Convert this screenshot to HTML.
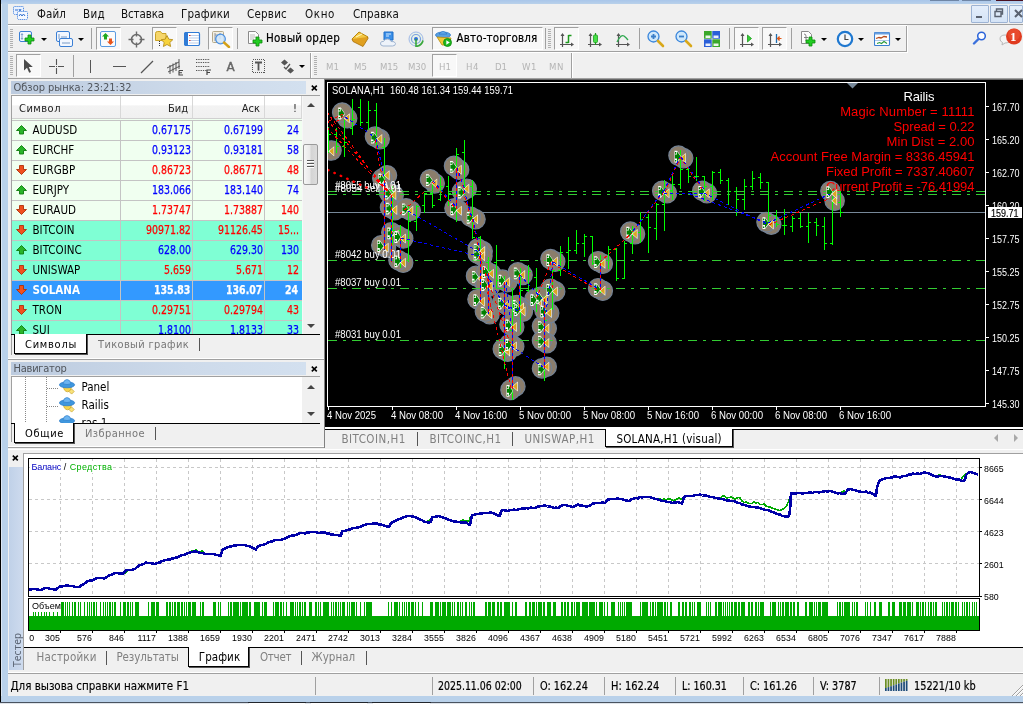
<!DOCTYPE html>
<html lang="ru"><head><meta charset="utf-8"><title>MetaTrader 4</title>
<style>

html,body{margin:0;padding:0;background:#fff;}
body{width:1036px;height:704px;overflow:hidden;position:relative;}
#app{position:absolute;left:0;top:0;width:1036px;height:704px;overflow:hidden;will-change:transform;font-family:"DejaVu Sans Condensed","DejaVu Sans","Liberation Sans",sans-serif;font-size:11px;}
#app div,#app svg,#app span.t{position:absolute;}
#app>div,#app>svg{display:block;}
span.t{white-space:pre;line-height:normal;}
.frame-l{left:0;top:0;width:8px;height:702px;background:linear-gradient(90deg,#000 0,#000 1px,#dbe6f3 1px,#dbe6f3 2px,#b9d1ea 2px,#b9d1ea 8px);}
.frame-t{left:1px;top:0;width:1022px;height:4px;background:linear-gradient(180deg,#a9c6ea,#b9d1ea);}
.frame-b{left:1px;top:696px;width:1022px;height:6px;background:#b9d1ea;}
.mdi{box-sizing:border-box;border:1px solid #9db3d3;background:linear-gradient(180deg,#e4eefb,#d4e3f6);border-radius:1px;}
.grip{background:repeating-linear-gradient(180deg,#b0b0b0 0,#b0b0b0 1px,transparent 1px,transparent 2px);}
.pressed{box-sizing:border-box;border:1px solid #a0a0a0;border-right-color:#fff;border-bottom-color:#fff;background:#f8f8f8;}
.vt{position:absolute;left:2px;top:37px;transform-origin:0 0;transform:rotate(-90deg);white-space:pre;font-size:10.500px;color:#5a6473;line-height:12px;}
.dd{width:0;height:0;border-left:3px solid transparent;border-right:3px solid transparent;border-top:3px solid #000;}


.phead{background:linear-gradient(90deg,#bccbdf,#cddaea 60%,#d3e0ef);}
.thead{background:linear-gradient(180deg,#fff 0,#fff 40%,#f3f3f3 45%,#f0f0f0 100%);box-sizing:border-box;border-right:1px solid #d8d8d8;border-bottom:1px solid #d0d0d0;}
.tab{box-sizing:border-box;background:#fff;border:1px solid #000;border-top:none;box-shadow:1px 1px 0 #555;}
.sthumb{box-sizing:border-box;border:1px solid #9a9a9a;border-radius:2px;background:linear-gradient(90deg,#f6f6f6,#e9e9e9 45%,#d4d4d4 55%,#dcdcdc);}



.vstrip{background:linear-gradient(90deg,#c0d1e8,#cedbee);}

</style></head>
<body>
<div id="app">
<div class="frame-l"></div><div class="frame-t"></div><div class="frame-b"></div>
<div style="left:930px;top:0px;width:29px;height:1px;background:#6f86a6;"></div>
<div style="left:962px;top:0px;width:29px;height:1px;background:#6f86a6;"></div>
<div style="left:996px;top:0px;width:27px;height:1px;background:#4a1020;"></div>
<div id="menubar" style="left:8px;top:4px;width:1015px;height:20px;background:#f0f0f0"></div>
<div style="left:8px;top:24px;width:1015px;height:1px;background:#a0a0a0;"></div>
<svg class="ic" style="left:12px;top:5px" width="17" height="16" viewBox="0 0 17 16">
<rect x="1.5" y="1.5" width="10" height="8" rx="1" fill="#eaf2ff" stroke="#4a86e0" stroke-dasharray="1.2 0.8"/>
<rect x="5.5" y="6.5" width="10" height="8" rx="1" fill="#f4f8ff" stroke="#4a86e0" stroke-dasharray="1.2 0.8"/>
<path d="M3 5h3M7 4l1 2 1-2M7 11l1.5-2 1.5 2 1.5-2 1.500 2" fill="none" stroke="#2f6fd0" stroke-width="1"/></svg>
<span class="t" style="left:37.00px;top:7.00px;font-family:'DejaVu Sans Condensed','DejaVu Sans','Liberation Sans',sans-serif;font-size:11.5px;color:#111;letter-spacing:0.102px;">Файл</span>
<span class="t" style="left:83.00px;top:7.00px;font-family:'DejaVu Sans Condensed','DejaVu Sans','Liberation Sans',sans-serif;font-size:11.5px;color:#111;letter-spacing:0.339px;">Вид</span>
<span class="t" style="left:121.00px;top:7.00px;font-family:'DejaVu Sans Condensed','DejaVu Sans','Liberation Sans',sans-serif;font-size:11.5px;color:#111;letter-spacing:-0.121px;">Вставка</span>
<span class="t" style="left:181.00px;top:7.00px;font-family:'DejaVu Sans Condensed','DejaVu Sans','Liberation Sans',sans-serif;font-size:11.5px;color:#111;letter-spacing:0.176px;">Графики</span>
<span class="t" style="left:247.00px;top:7.00px;font-family:'DejaVu Sans Condensed','DejaVu Sans','Liberation Sans',sans-serif;font-size:11.5px;color:#111;letter-spacing:0.219px;">Сервис</span>
<span class="t" style="left:305.00px;top:7.00px;font-family:'DejaVu Sans Condensed','DejaVu Sans','Liberation Sans',sans-serif;font-size:11.5px;color:#111;letter-spacing:0.625px;">Окно</span>
<span class="t" style="left:353.00px;top:7.00px;font-family:'DejaVu Sans Condensed','DejaVu Sans','Liberation Sans',sans-serif;font-size:11.5px;color:#111;letter-spacing:0.058px;">Справка</span>
<div class="mdi" style="left:971px;top:5px;width:18px;height:18px"></div>
<div class="mdi" style="left:990px;top:5px;width:18px;height:18px"></div>
<div class="mdi" style="left:1009px;top:5px;width:14px;height:18px"></div>
<div style="left:976px;top:16px;width:6px;height:2px;background:#5a6270;"></div>
<svg class="ic" style="left:994px;top:8px" width="10" height="10" viewBox="0 0 10 10"><path d="M2.500 3V1h6v5h-2M1 3.500h6v5h-6z" fill="none" stroke="#5a6270" stroke-width="1.4"/></svg>
<svg class="ic" style="left:1014px;top:9px" width="9" height="9" viewBox="0 0 9 9"><path d="M1 1l7 7M8 1l-7 7" stroke="#5a6270" stroke-width="2" fill="none"/></svg>
<div style="left:8px;top:25px;width:1015px;height:54px;background:#f0f0f0;"></div>
<div style="left:8px;top:51px;width:899px;height:1px;background:#a0a0a0;"></div>
<div style="left:8px;top:52px;width:899px;height:1px;background:#ffffff;"></div>
<div style="left:906px;top:26px;width:1px;height:26px;background:#a0a0a0;"></div>
<div style="left:907px;top:26px;width:1px;height:27px;background:#ffffff;"></div>
<div style="left:8px;top:53px;width:1015px;height:25px;background:#f0f0f0;"></div>
<div style="left:8px;top:78px;width:1015px;height:1px;background:#a0a0a0;"></div>
<div style="left:8px;top:79px;width:317px;height:1px;background:#ffffff;"></div>
<div style="left:8px;top:25px;width:899px;height:1px;background:#ffffff;"></div>
<div class="grip" style="left:10px;top:29px;width:3px;height:19px"></div>
<div class="grip" style="left:548px;top:29px;width:3px;height:19px"></div>
<div class="grip" style="left:10px;top:56px;width:3px;height:19px"></div>
<div class="grip" style="left:314px;top:56px;width:3px;height:19px"></div>
<div style="left:91px;top:28px;width:1px;height:21px;background:#a0a0a0;"></div>
<div style="left:237px;top:28px;width:1px;height:21px;background:#a0a0a0;"></div>
<div style="left:545px;top:28px;width:1px;height:21px;background:#a0a0a0;"></div>
<div style="left:639px;top:28px;width:1px;height:21px;background:#a0a0a0;"></div>
<div style="left:729px;top:28px;width:1px;height:21px;background:#a0a0a0;"></div>
<div style="left:791px;top:28px;width:1px;height:21px;background:#a0a0a0;"></div>
<div style="left:73px;top:55px;width:1px;height:22px;background:#a0a0a0;"></div>
<div style="left:310px;top:53px;width:1px;height:25px;background:#a0a0a0;"></div>
<div style="left:311px;top:53px;width:1px;height:25px;background:#ffffff;"></div>
<div style="left:571px;top:53px;width:1px;height:25px;background:#a0a0a0;"></div>
<div style="left:572px;top:53px;width:1px;height:25px;background:#ffffff;"></div>
<div class="pressed" style="left:96px;top:27px;width:25px;height:23px"></div>
<div class="pressed" style="left:152px;top:27px;width:25px;height:23px"></div>
<div class="pressed" style="left:208px;top:27px;width:25px;height:23px"></div>
<div class="pressed" style="left:432px;top:27px;width:111px;height:23px"></div>
<div class="pressed" style="left:554px;top:27px;width:25px;height:23px"></div>
<div class="pressed" style="left:734px;top:27px;width:25px;height:23px"></div>
<div class="pressed" style="left:762px;top:27px;width:25px;height:23px"></div>
<div class="pressed" style="left:16px;top:54px;width:25px;height:23px"></div>
<div class="pressed" style="left:432px;top:54px;width:25px;height:23px"></div>
<div class="dd" style="left:41px;top:38px"></div>
<div class="dd" style="left:78px;top:38px"></div>
<div class="dd" style="left:821px;top:38px"></div>
<div class="dd" style="left:858px;top:38px"></div>
<div class="dd" style="left:895px;top:38px"></div>
<div class="dd" style="left:299px;top:65px"></div>
<span class="t" style="left:266.00px;top:31.00px;font-family:'DejaVu Sans Condensed','DejaVu Sans','Liberation Sans',sans-serif;font-size:11.5px;color:#000;letter-spacing:0.237px;-webkit-text-stroke:0.2px #000;">Новый ордер</span>
<span class="t" style="left:456.50px;top:31.00px;font-family:'DejaVu Sans Condensed','DejaVu Sans','Liberation Sans',sans-serif;font-size:11.5px;color:#000;letter-spacing:0.162px;-webkit-text-stroke:0.2px #000;">Авто-торговля</span>
<span class="t" style="left:326.00px;top:61.00px;font-family:'DejaVu Sans Condensed','DejaVu Sans','Liberation Sans',sans-serif;font-size:9.5px;color:#b4b4b4;letter-spacing:0.094px;">M1</span>
<span class="t" style="left:354.00px;top:61.00px;font-family:'DejaVu Sans Condensed','DejaVu Sans','Liberation Sans',sans-serif;font-size:9.5px;color:#b4b4b4;letter-spacing:0.094px;">M5</span>
<span class="t" style="left:380.00px;top:61.00px;font-family:'DejaVu Sans Condensed','DejaVu Sans','Liberation Sans',sans-serif;font-size:9.5px;color:#b4b4b4;letter-spacing:-0.083px;">M15</span>
<span class="t" style="left:408.00px;top:61.00px;font-family:'DejaVu Sans Condensed','DejaVu Sans','Liberation Sans',sans-serif;font-size:9.5px;color:#b4b4b4;letter-spacing:-0.083px;">M30</span>
<span class="t" style="left:439.00px;top:61.00px;font-family:'DejaVu Sans Condensed','DejaVu Sans','Liberation Sans',sans-serif;font-size:9.5px;color:#b4b4b4;letter-spacing:0.062px;">H1</span>
<span class="t" style="left:466.00px;top:61.00px;font-family:'DejaVu Sans Condensed','DejaVu Sans','Liberation Sans',sans-serif;font-size:9.5px;color:#b4b4b4;letter-spacing:0.562px;">H4</span>
<span class="t" style="left:495.00px;top:61.00px;font-family:'DejaVu Sans Condensed','DejaVu Sans','Liberation Sans',sans-serif;font-size:9.5px;color:#b4b4b4;letter-spacing:-0.016px;">D1</span>
<span class="t" style="left:522.00px;top:61.00px;font-family:'DejaVu Sans Condensed','DejaVu Sans','Liberation Sans',sans-serif;font-size:9.5px;color:#b4b4b4;letter-spacing:0.555px;">W1</span>
<span class="t" style="left:549.00px;top:61.00px;font-family:'DejaVu Sans Condensed','DejaVu Sans','Liberation Sans',sans-serif;font-size:9.5px;color:#b4b4b4;letter-spacing:0.609px;">MN</span>
<svg class="ic" style="left:19px;top:31px" width="17" height="16" viewBox="0 0 17 16"><rect x="0.5" y="0.5" width="12" height="10" rx="1.5" fill="#f2f7ff" stroke="#3b7fd4"/><path d="M3 3v5M2 4l1-1.500 1 1.500M2 7l1 1.500 1-1.500" stroke="#6a8fc0" fill="none" stroke-width="0.8"/><path d="M9 4h3v3h3v3h-3v3h-3v-3h-3v-3h3z" fill="#22cc22" stroke="#0a8a0a" stroke-width="0.8"/></svg>
<svg class="ic" style="left:56px;top:31px" width="17" height="16" viewBox="0 0 17 16"><rect x="0.5" y="0.5" width="13" height="10" rx="1.5" fill="#f2f7ff" stroke="#3b7fd4"/><rect x="3.500" y="7.500" width="13" height="8" rx="1.5" fill="#f2f7ff" stroke="#3b7fd4"/><path d="M3 3v5M5 6h6M6 12h8" stroke="#6a8fc0" fill="none" stroke-width="0.9"/></svg>
<svg class="ic" style="left:100px;top:31px" width="16" height="16" viewBox="0 0 16 16"><rect x="0.5" y="0.5" width="15" height="15" rx="1.5" fill="#fbfbfb" stroke="#5a9be0"/><path d="M5.500 2l3.500 3.500h-2v3h-3v-3h-2z" fill="#1ea81e"/><path d="M10.500 14l3.500-3.500h-2v-3h-3v3h-2z" fill="#e8531a"/></svg>
<svg class="ic" style="left:128px;top:31px" width="17" height="17" viewBox="0 0 17 17"><circle cx="8.500" cy="8.500" r="5" fill="none" stroke="#6a6a6a" stroke-width="1.6"/><path d="M8.500 0.500v5M8.500 11.500v5M0.500 8.500h5M11.500 8.500h5" stroke="#6a6a6a" stroke-width="1.4"/></svg>
<svg class="ic" style="left:155px;top:30px" width="19" height="18" viewBox="0 0 19 18"><path d="M0.500 3.500q0-2 2-2h3l1.500 2h4v7h-10.500z" fill="#f6d66a" stroke="#c9a227"/><path d="M12 5.500l1.800 3.700 4 .5-3 2.800.8 4-3.600-2-3.600 2 .8-4-3-2.800 4-.5z" fill="#f7d33c" stroke="#b8901c" stroke-width="0.9"/><path d="M4.500 11v5" stroke="#333" stroke-dasharray="1 1"/></svg>
<svg class="ic" style="left:184px;top:32px" width="17" height="14" viewBox="0 0 17 14"><rect x="0.5" y="0.5" width="15" height="13" rx="1.5" fill="#fff" stroke="#2f7bd6" stroke-width="1.2"/><rect x="1" y="1" width="3" height="12" fill="#2f7bd6"/><path d="M5 3.500h10M5 6h10M5 8.500h10M5 11h10" stroke="#9bb8e0" stroke-width="0.7"/><path d="M5 3.500h1.500M5 8.500h1.500" stroke="#e03030" stroke-width="1"/></svg>
<svg class="ic" style="left:211px;top:30px" width="20" height="18" viewBox="0 0 20 18"><rect x="1.500" y="1.500" width="11" height="11" rx="1" fill="#f3efe2" stroke="#b5a98a"/><path d="M4 3v8M4 5h5M9 3v6" stroke="#8a8f99" stroke-width="0.9"/><circle cx="9.500" cy="9" r="4.800" fill="#cfe6fb" fill-opacity="0.85" stroke="#4a90e2" stroke-width="1.3"/><path d="M13 12.500l5 4.500" stroke="#d4a017" stroke-width="2.4" stroke-linecap="round"/></svg>
<svg class="ic" style="left:247px;top:31px" width="17" height="17" viewBox="0 0 17 17"><path d="M1.500 0.500h7l3 3v9h-10z" fill="#fdfdfd" stroke="#8a8a8a"/><path d="M3 4h5M3 6h6M3 8h4" stroke="#aaa" stroke-width="0.8"/><path d="M9 6h3v3h3v3h-3v3h-3v-3h-3v-3h3z" fill="#22cc22" stroke="#0a8a0a" stroke-width="0.8"/></svg>
<svg class="ic" style="left:351px;top:31px" width="18" height="16" viewBox="0 0 18 16"><path d="M1 8l7-7 9 5-6 8z" fill="#f4c842" stroke="#b8860b"/><path d="M1 8l1 2.500 10 5 5-8-.5-1.500" fill="#e0a020" stroke="#a87008" stroke-width="0.8"/><path d="M5 6l6-3" stroke="#fff2b0" stroke-width="1.2"/></svg>
<svg class="ic" style="left:380px;top:31px" width="17" height="16" viewBox="0 0 17 16"><path d="M4 1h9v8h-9z" fill="#3b8fe8" stroke="#1f6fc8"/><path d="M6 3h5M6 5h3" stroke="#d8ecff" stroke-width="1"/><path d="M3 15q-3-.5-2.500-3 .5-2 3-1.500 1-3 4.500-2.500 2.500.5 3 2.500 4-.5 4.500 2 0 2.500-3 2.500z" fill="#eef3fa" stroke="#9fb4d0"/></svg>
<svg class="ic" style="left:408px;top:31px" width="17" height="16" viewBox="0 0 17 16"><circle cx="8" cy="8" r="7" fill="#e8f1e8" stroke="#9fb8e8" stroke-width="1"/><circle cx="8" cy="8" r="4.500" fill="none" stroke="#7aa0e0" stroke-width="1.2"/><circle cx="8" cy="8" r="2" fill="#2f6fd8"/><path d="M8 8v7.500q6-1 7-6" fill="none" stroke="#3aa83a" stroke-width="1.6"/></svg>
<svg class="ic" style="left:435px;top:30px" width="18" height="18" viewBox="0 0 18 18"><ellipse cx="8" cy="5" rx="7.500" ry="3" fill="#5aa0e0" stroke="#2f78c8" stroke-width="0.8"/><path d="M4 4q4-5 8 0z" fill="#6cb0ee" stroke="#2f78c8" stroke-width="0.8"/><path d="M2 7l5 8h7l2-7z" fill="#f2c838" stroke="#b88a10" stroke-width="0.8"/><circle cx="12.500" cy="12.500" r="4" fill="#1db81d" stroke="#0c8a0c" stroke-width="0.8"/><path d="M11.300 10.300l3.500 2.200-3.500 2.200z" fill="#fff"/></svg>
<svg class="ic" style="left:559px;top:32px" width="16" height="16" viewBox="0 0 16 16"><path d="M3.500 2v13M1 12.500h13" stroke="#555" stroke-width="1.2" fill="none"/><path d="M3.500 1l-2 3h4zM15 12.500l-3-2v4z" fill="#555"/><path d="M9.500 3v8M9.500 3.500h3M6.500 10.500h3" stroke="#1f9a1f" stroke-width="1.5" fill="none"/></svg>
<svg class="ic" style="left:587px;top:30px" width="16" height="18" viewBox="0 -2 16 18"><path d="M3.500 2v13M1 12.500h13" stroke="#555" stroke-width="1.2" fill="none"/><path d="M3.500 1l-2 3h4zM15 12.500l-3-2v4z" fill="#555"/><path d="M8.500 1v12" stroke="#1f9a1f" stroke-width="1.2"/><rect x="6.500" y="3" width="4" height="7.500" rx="1" fill="#46e046" stroke="#1f9a1f" stroke-width="0.8"/></svg>
<svg class="ic" style="left:615px;top:32px" width="16" height="16" viewBox="0 0 16 16"><path d="M3.500 2v13M1 12.500h13" stroke="#555" stroke-width="1.2" fill="none"/><path d="M3.500 1l-2 3h4zM15 12.500l-3-2v4z" fill="#555"/><path d="M2 10q4-8 7-6 2 1.500 4 4" stroke="#2fa84f" stroke-width="1.3" fill="none"/></svg>
<svg class="ic" style="left:647px;top:30px" width="18" height="18" viewBox="0 0 18 18"><circle cx="6.500" cy="6.500" r="5.500" fill="#cfe8fb" stroke="#3a86dc" stroke-width="1.3"/><path d="M4 6.500h5M6.500 4v5" stroke="#3a7ec8" stroke-width="1.8"/><path d="M11 11l5 5" stroke="#d9a81a" stroke-width="2.600" stroke-linecap="round"/></svg>
<svg class="ic" style="left:675px;top:30px" width="18" height="18" viewBox="0 0 18 18"><circle cx="6.500" cy="6.500" r="5.500" fill="#cfe8fb" stroke="#3a86dc" stroke-width="1.3"/><path d="M4 6.500h5" stroke="#3a7ec8" stroke-width="1.8"/><path d="M11 11l5 5" stroke="#d9a81a" stroke-width="2.600" stroke-linecap="round"/></svg>
<svg class="ic" style="left:704px;top:31px" width="16" height="16" viewBox="0 0 16 16"><rect x="0" y="0" width="8" height="8" fill="#3aa82a"/><rect x="8" y="0" width="8" height="8" fill="#2a5fd8"/><rect x="0" y="8" width="8" height="8" fill="#2a5fd8"/><rect x="8" y="8" width="8" height="8" fill="#3aa82a"/><path d="M1.500 4.500h5v2.500h-5zM9.500 4.500h5v2.500h-5zM1.500 12.500h5v2.500h-5zM9.500 12.500h5v2.500h-5z" fill="#fff" fill-opacity="0.9"/><path d="M8 0v16M0 8h16" stroke="#f0f0f0" stroke-width="0.6"/></svg>
<svg class="ic" style="left:739px;top:32px" width="16" height="16" viewBox="0 0 16 16"><path d="M3.500 2v13M1 12.500h13" stroke="#555" stroke-width="1.2" fill="none"/><path d="M3.500 1l-2 3h4zM15 12.500l-3-2v4z" fill="#555"/><path d="M8.500 3l4 3.500-4 3.500z" fill="#35d035" stroke="#1f9a1f" stroke-width="0.8"/></svg>
<svg class="ic" style="left:767px;top:32px" width="16" height="16" viewBox="0 0 16 16"><path d="M3.500 2v13M1 12.500h13" stroke="#555" stroke-width="1.2" fill="none"/><path d="M3.500 1l-2 3h4zM15 12.500l-3-2v4z" fill="#555"/><path d="M9.500 2v9" stroke="#1f6fb0" stroke-width="1.3"/><path d="M14.500 6.500h-4M12.500 4.500l-2 2 2 2" stroke="#e05a1a" stroke-width="1.2" fill="#e05a1a"/></svg>
<svg class="ic" style="left:801px;top:31px" width="17" height="17" viewBox="0 0 17 17"><path d="M0.500 0.500h7l3 3v9h-10z" fill="#fdfdfd" stroke="#8a8a8a"/><path d="M3 3q2 0 2 2v5M3 6.500h4" stroke="#777" stroke-width="0.9" fill="none"/><path d="M8 6h3v3h3v3h-3v3h-3v-3h-3v-3h3z" fill="#22cc22" stroke="#0a8a0a" stroke-width="0.8"/></svg>
<svg class="ic" style="left:836px;top:30px" width="18" height="18" viewBox="0 0 18 18"><circle cx="9" cy="9" r="7.200" fill="#f4f8fc" stroke="#1f78d0" stroke-width="2.200"/><path d="M9 4.500v5h3.500" stroke="#444" stroke-width="1.2" fill="none"/></svg>
<svg class="ic" style="left:874px;top:32px" width="17" height="14" viewBox="0 0 17 14"><rect x="0.5" y="0.5" width="15" height="13" rx="1" fill="#fff" stroke="#3a7fd0" stroke-width="1.1"/><rect x="0.5" y="0.5" width="15" height="2" fill="#6aa0e0"/><path d="M2 6.500l3-1 2 .5 3-1.500 3 .5" stroke="#b84a1a" stroke-width="1.3" fill="none"/><path d="M1 8.500h14" stroke="#8ab0e0" stroke-width="0.7"/><path d="M3 11.500l2.500-1 2 1 2.500-2 3 2" stroke="#2a9a3a" stroke-width="1.100" fill="none"/></svg>
<svg class="ic" style="left:972px;top:31px" width="16" height="14" viewBox="0 0 16 14"><circle cx="9.500" cy="5" r="3.800" fill="#fdfdff" stroke="#2a63d8" stroke-width="1.5"/><path d="M6.500 8l-4.500 4.500" stroke="#3a70dc" stroke-width="2.400" stroke-linecap="round"/></svg>
<svg class="ic" style="left:998px;top:27px" width="25" height="22" viewBox="0 0 25 22"><path d="M2 12q0-4 5-4 5 0 5 4t-5 4l-3 2 .5-2.500q-2.500-1-2.500-3.500z" fill="#f4f4f4" stroke="#b8b8b8" stroke-width="1"/><circle cx="16" cy="9.500" r="8" fill="#e03a1e"/><circle cx="16" cy="7.500" r="6" fill="#f05a3a" fill-opacity="0.5"/></svg>
<span class="t" style="left:1010.00px;top:29.00px;font-family:'Liberation Serif','DejaVu Serif',serif;font-size:13px;color:#fff;font-weight:bold;">1</span>
<svg class="ic" style="left:23px;top:58px" width="10" height="16" viewBox="0 0 10 16"><path d="M1 1v11.500l3-2.800 2.200 5 1.800-.8-2.200-4.900h4z" fill="#4a4a4a"/></svg>
<svg class="ic" style="left:49px;top:58px" width="16" height="17" viewBox="0 0 16 17"><path d="M7.500 1v6M7.500 10v6M0 8.500h6M9 8.500h6" stroke="#555" stroke-width="1.1"/><path d="M7.500 8v1" stroke="#555" stroke-width="1"/></svg>
<div style="left:90px;top:60px;width:1px;height:13px;background:#555;"></div>
<div style="left:113px;top:66px;width:13px;height:1px;background:#555;"></div>
<svg class="ic" style="left:140px;top:60px" width="14" height="14" viewBox="0 0 14 14"><path d="M1 13L13 1" stroke="#555" stroke-width="1.2"/></svg>
<svg class="ic" style="left:166px;top:58px" width="18" height="18" viewBox="0 0 18 18"><path d="M1 10l12-6M2 14l12-6M4 7v9M7 5.500v9M10 4v9M13 1v10" stroke="#555" stroke-width="1"/><path d="M13 12.500h4M13 12.500v4.500h4M13 14.700h3" stroke="#444" stroke-width="1.1" fill="none"/></svg>
<svg class="ic" style="left:196px;top:58px" width="16" height="18" viewBox="0 0 16 18"><path d="M0 1.500h14M0 4.500h14M0 8.500h14M0 12.500h11" stroke="#555" stroke-width="1" stroke-dasharray="1.3 1"/><path d="M11 17v-5h4M11 14.500h3" stroke="#444" stroke-width="1.2" fill="none"/></svg>
<span class="t" style="left:226.50px;top:60.00px;font-family:'DejaVu Sans','Liberation Sans',sans-serif;font-size:12px;color:#666;-webkit-text-stroke:0.4px #666;">A</span>
<svg class="ic" style="left:252px;top:58px" width="14" height="15" viewBox="0 0 14 15"><rect x="0.5" y="1.500" width="12" height="13" fill="none" stroke="#555" stroke-dasharray="1 1" shape-rendering="crispEdges"/><path d="M3 4.500h7M6.500 4.500v8" stroke="#555" stroke-width="1.800"/></svg>
<svg class="ic" style="left:280px;top:59px" width="15" height="15" viewBox="0 0 15 15"><path d="M1 3.500l3.500-3 3.500 3-3.500 3zM7 11.500l3.500-3 3.500 3-3.500 3z" fill="#555"/><path d="M4 8l2 2 4-5" stroke="#555" stroke-width="1.3" fill="none"/></svg>
<div style="left:8px;top:79px;width:316px;height:370px;background:#f0f0f0;"></div>
<div style="left:324px;top:79px;width:1px;height:370px;background:#808080;"></div>
<div style="left:8px;top:358px;width:316px;height:1px;background:#fff;"></div>
<div style="left:8px;top:359px;width:316px;height:1px;background:#a0a0a0;"></div>
<div class="phead" style="left:11px;top:81px;width:295px;height:13px"></div>
<span class="t" style="left:13.50px;top:81.00px;font-family:'DejaVu Sans Condensed','DejaVu Sans','Liberation Sans',sans-serif;font-size:11px;color:#50555c;letter-spacing:-0.008px;">Обзор рынка: 23:21:32</span>
<svg class="ic" style="left:310.5px;top:85px" width="7" height="6" viewBox="0 0 7 6"><path d="M0.800 0.600l5 4.800M5.800 0.600l-5 4.800" stroke="#000" stroke-width="1.6"/></svg>
<div style="left:11px;top:95px;width:309px;height:1px;background:#a0a0a0;"></div>
<div style="left:11px;top:95px;width:1px;height:240px;background:#a0a0a0;"></div>
<div style="left:12px;top:96px;width:290px;height:238px;background:#f0fff0;"></div>
<div class="thead" style="left:12px;top:96px;width:109px;height:23px"></div>
<div class="thead" style="left:121px;top:96px;width:72px;height:23px"></div>
<div class="thead" style="left:193px;top:96px;width:72px;height:23px"></div>
<div class="thead" style="left:265px;top:96px;width:37px;height:23px"></div>
<span class="t" style="left:19.00px;top:102.00px;font-family:'DejaVu Sans Condensed','DejaVu Sans','Liberation Sans',sans-serif;font-size:11px;color:#222;letter-spacing:0.495px;">Символ</span>
<span class="t" style="left:167.94px;top:102.00px;font-family:'DejaVu Sans Condensed','DejaVu Sans','Liberation Sans',sans-serif;font-size:11px;color:#222;">Бид</span>
<span class="t" style="left:241.81px;top:102.00px;font-family:'DejaVu Sans Condensed','DejaVu Sans','Liberation Sans',sans-serif;font-size:11px;color:#222;">Аск</span>
<span class="t" style="left:293.03px;top:102.00px;font-family:'DejaVu Sans Condensed','DejaVu Sans','Liberation Sans',sans-serif;font-size:11px;color:#222;">!</span>
<div style="left:12px;top:120px;width:290px;height:214px;overflow:hidden">
<div style="left:0px;top:1px;width:290px;height:19px;background:#f0fff0;"></div>
<div style="left:0px;top:0px;width:290px;height:1px;background:#c4c4c4;"></div>
<div style="left:0px;top:21px;width:290px;height:19px;background:#f0fff0;"></div>
<div style="left:0px;top:20px;width:290px;height:1px;background:#c4c4c4;"></div>
<div style="left:0px;top:41px;width:290px;height:19px;background:#f0fff0;"></div>
<div style="left:0px;top:40px;width:290px;height:1px;background:#c4c4c4;"></div>
<div style="left:0px;top:61px;width:290px;height:19px;background:#f0fff0;"></div>
<div style="left:0px;top:60px;width:290px;height:1px;background:#c4c4c4;"></div>
<div style="left:0px;top:81px;width:290px;height:19px;background:#f0fff0;"></div>
<div style="left:0px;top:80px;width:290px;height:1px;background:#c4c4c4;"></div>
<div style="left:0px;top:101px;width:290px;height:19px;background:#7fffd4;"></div>
<div style="left:0px;top:100px;width:290px;height:1px;background:#c4c4c4;"></div>
<div style="left:0px;top:121px;width:290px;height:19px;background:#7fffd4;"></div>
<div style="left:0px;top:120px;width:290px;height:1px;background:#c4c4c4;"></div>
<div style="left:0px;top:141px;width:290px;height:19px;background:#7fffd4;"></div>
<div style="left:0px;top:140px;width:290px;height:1px;background:#c4c4c4;"></div>
<div style="left:0px;top:161px;width:290px;height:19px;background:#3399ff;"></div>
<div style="left:0px;top:160px;width:290px;height:1px;background:#c4c4c4;"></div>
<div style="left:0px;top:181px;width:290px;height:19px;background:#7fffd4;"></div>
<div style="left:0px;top:180px;width:290px;height:1px;background:#c4c4c4;"></div>
<div style="left:0px;top:201px;width:290px;height:19px;background:#7fffd4;"></div>
<div style="left:0px;top:200px;width:290px;height:1px;background:#c4c4c4;"></div>
<div style="left:108px;top:0px;width:1px;height:214px;background:#c4c4c4;"></div>
<div style="left:180px;top:0px;width:1px;height:214px;background:#c4c4c4;"></div>
<div style="left:252px;top:0px;width:1px;height:214px;background:#c4c4c4;"></div>
</div>
<svg class="ic" style="left:16px;top:125px" width="11" height="10" viewBox="0 0 11 10"><path d="M5.500 0.500l5 5h-3v3.500h-4v-3.500h-3z" fill="#28b428" stroke="#0c7a0c" stroke-width="0.9"/></svg>
<svg class="ic" style="left:16px;top:145px" width="11" height="10" viewBox="0 0 11 10"><path d="M5.500 0.500l5 5h-3v3.500h-4v-3.500h-3z" fill="#28b428" stroke="#0c7a0c" stroke-width="0.9"/></svg>
<svg class="ic" style="left:16px;top:165px" width="11" height="10" viewBox="0 0 11 10"><path d="M5.500 9.500l5-5h-3v-4h-4v4h-3z" fill="#f0501e" stroke="#b03008" stroke-width="0.9"/></svg>
<svg class="ic" style="left:16px;top:185px" width="11" height="10" viewBox="0 0 11 10"><path d="M5.500 0.500l5 5h-3v3.500h-4v-3.500h-3z" fill="#28b428" stroke="#0c7a0c" stroke-width="0.9"/></svg>
<svg class="ic" style="left:16px;top:205px" width="11" height="10" viewBox="0 0 11 10"><path d="M5.500 9.500l5-5h-3v-4h-4v4h-3z" fill="#f0501e" stroke="#b03008" stroke-width="0.9"/></svg>
<svg class="ic" style="left:16px;top:225px" width="11" height="10" viewBox="0 0 11 10"><path d="M5.500 9.500l5-5h-3v-4h-4v4h-3z" fill="#f0501e" stroke="#b03008" stroke-width="0.9"/></svg>
<svg class="ic" style="left:16px;top:245px" width="11" height="10" viewBox="0 0 11 10"><path d="M5.500 0.500l5 5h-3v3.500h-4v-3.500h-3z" fill="#28b428" stroke="#0c7a0c" stroke-width="0.9"/></svg>
<svg class="ic" style="left:16px;top:265px" width="11" height="10" viewBox="0 0 11 10"><path d="M5.500 9.500l5-5h-3v-4h-4v4h-3z" fill="#f0501e" stroke="#b03008" stroke-width="0.9"/></svg>
<svg class="ic" style="left:16px;top:285px" width="11" height="10" viewBox="0 0 11 10"><path d="M5.500 9.500l5-5h-3v-4h-4v4h-3z" fill="#f0501e" stroke="#b03008" stroke-width="0.9"/></svg>
<svg class="ic" style="left:16px;top:305px" width="11" height="10" viewBox="0 0 11 10"><path d="M5.500 9.500l5-5h-3v-4h-4v4h-3z" fill="#f0501e" stroke="#b03008" stroke-width="0.9"/></svg>
<svg class="ic" style="left:16px;top:325px" width="11" height="9" viewBox="0 0 11 9"><path d="M5.500 0.500l5 5h-3v3.500h-4v-3.500h-3z" fill="#28b428" stroke="#0c7a0c" stroke-width="0.9"/></svg>
<div style="left:12px;top:120px;width:290px;height:214px;overflow:hidden">
<span class="t" style="left:20.50px;top:3.00px;font-family:'DejaVu Sans Condensed','DejaVu Sans','Liberation Sans',sans-serif;font-size:11.5px;color:#000;">AUDUSD</span>
<span class="t" style="left:139.61px;top:3.00px;font-family:'DejaVu Sans Condensed','DejaVu Sans','Liberation Sans',sans-serif;font-size:12.3px;color:#0000ff;transform:scaleX(0.8500);transform-origin:0 0;-webkit-text-stroke:0.25px #0000ff;">0.67175</span>
<span class="t" style="left:211.61px;top:3.00px;font-family:'DejaVu Sans Condensed','DejaVu Sans','Liberation Sans',sans-serif;font-size:12.3px;color:#0000ff;transform:scaleX(0.8500);transform-origin:0 0;-webkit-text-stroke:0.25px #0000ff;">0.67199</span>
<span class="t" style="left:274.53px;top:3.00px;font-family:'DejaVu Sans Condensed','DejaVu Sans','Liberation Sans',sans-serif;font-size:12.3px;color:#0000ff;transform:scaleX(0.8500);transform-origin:0 0;-webkit-text-stroke:0.25px #0000ff;">24</span>
<span class="t" style="left:20.50px;top:23.00px;font-family:'DejaVu Sans Condensed','DejaVu Sans','Liberation Sans',sans-serif;font-size:11.5px;color:#000;">EURCHF</span>
<span class="t" style="left:139.61px;top:23.00px;font-family:'DejaVu Sans Condensed','DejaVu Sans','Liberation Sans',sans-serif;font-size:12.3px;color:#0000ff;transform:scaleX(0.8500);transform-origin:0 0;-webkit-text-stroke:0.25px #0000ff;">0.93123</span>
<span class="t" style="left:211.61px;top:23.00px;font-family:'DejaVu Sans Condensed','DejaVu Sans','Liberation Sans',sans-serif;font-size:12.3px;color:#0000ff;transform:scaleX(0.8500);transform-origin:0 0;-webkit-text-stroke:0.25px #0000ff;">0.93181</span>
<span class="t" style="left:274.53px;top:23.00px;font-family:'DejaVu Sans Condensed','DejaVu Sans','Liberation Sans',sans-serif;font-size:12.3px;color:#0000ff;transform:scaleX(0.8500);transform-origin:0 0;-webkit-text-stroke:0.25px #0000ff;">58</span>
<span class="t" style="left:20.50px;top:43.00px;font-family:'DejaVu Sans Condensed','DejaVu Sans','Liberation Sans',sans-serif;font-size:11.5px;color:#000;">EURGBP</span>
<span class="t" style="left:139.61px;top:43.00px;font-family:'DejaVu Sans Condensed','DejaVu Sans','Liberation Sans',sans-serif;font-size:12.3px;color:#ff0000;transform:scaleX(0.8500);transform-origin:0 0;-webkit-text-stroke:0.25px #ff0000;">0.86723</span>
<span class="t" style="left:211.61px;top:43.00px;font-family:'DejaVu Sans Condensed','DejaVu Sans','Liberation Sans',sans-serif;font-size:12.3px;color:#ff0000;transform:scaleX(0.8500);transform-origin:0 0;-webkit-text-stroke:0.25px #ff0000;">0.86771</span>
<span class="t" style="left:274.53px;top:43.00px;font-family:'DejaVu Sans Condensed','DejaVu Sans','Liberation Sans',sans-serif;font-size:12.3px;color:#ff0000;transform:scaleX(0.8500);transform-origin:0 0;-webkit-text-stroke:0.25px #ff0000;">48</span>
<span class="t" style="left:20.50px;top:63.00px;font-family:'DejaVu Sans Condensed','DejaVu Sans','Liberation Sans',sans-serif;font-size:11.5px;color:#000;">EURJPY</span>
<span class="t" style="left:139.61px;top:63.00px;font-family:'DejaVu Sans Condensed','DejaVu Sans','Liberation Sans',sans-serif;font-size:12.3px;color:#0000ff;transform:scaleX(0.8500);transform-origin:0 0;-webkit-text-stroke:0.25px #0000ff;">183.066</span>
<span class="t" style="left:211.61px;top:63.00px;font-family:'DejaVu Sans Condensed','DejaVu Sans','Liberation Sans',sans-serif;font-size:12.3px;color:#0000ff;transform:scaleX(0.8500);transform-origin:0 0;-webkit-text-stroke:0.25px #0000ff;">183.140</span>
<span class="t" style="left:274.53px;top:63.00px;font-family:'DejaVu Sans Condensed','DejaVu Sans','Liberation Sans',sans-serif;font-size:12.3px;color:#0000ff;transform:scaleX(0.8500);transform-origin:0 0;-webkit-text-stroke:0.25px #0000ff;">74</span>
<span class="t" style="left:20.50px;top:83.00px;font-family:'DejaVu Sans Condensed','DejaVu Sans','Liberation Sans',sans-serif;font-size:11.5px;color:#000;">EURAUD</span>
<span class="t" style="left:139.61px;top:83.00px;font-family:'DejaVu Sans Condensed','DejaVu Sans','Liberation Sans',sans-serif;font-size:12.3px;color:#ff0000;transform:scaleX(0.8500);transform-origin:0 0;-webkit-text-stroke:0.25px #ff0000;">1.73747</span>
<span class="t" style="left:211.61px;top:83.00px;font-family:'DejaVu Sans Condensed','DejaVu Sans','Liberation Sans',sans-serif;font-size:12.3px;color:#ff0000;transform:scaleX(0.8500);transform-origin:0 0;-webkit-text-stroke:0.25px #ff0000;">1.73887</span>
<span class="t" style="left:268.54px;top:83.00px;font-family:'DejaVu Sans Condensed','DejaVu Sans','Liberation Sans',sans-serif;font-size:12.3px;color:#ff0000;transform:scaleX(0.8500);transform-origin:0 0;-webkit-text-stroke:0.25px #ff0000;">140</span>
<span class="t" style="left:20.50px;top:103.00px;font-family:'DejaVu Sans Condensed','DejaVu Sans','Liberation Sans',sans-serif;font-size:11.5px;color:#000;">BITCOIN</span>
<span class="t" style="left:133.64px;top:103.00px;font-family:'DejaVu Sans Condensed','DejaVu Sans','Liberation Sans',sans-serif;font-size:12.3px;color:#ff0000;transform:scaleX(0.8500);transform-origin:0 0;-webkit-text-stroke:0.25px #ff0000;">90971.82</span>
<span class="t" style="left:205.64px;top:103.00px;font-family:'DejaVu Sans Condensed','DejaVu Sans','Liberation Sans',sans-serif;font-size:12.3px;color:#ff0000;transform:scaleX(0.8500);transform-origin:0 0;-webkit-text-stroke:0.25px #ff0000;">91126.45</span>
<span class="t" style="left:265.57px;top:103.00px;font-family:'DejaVu Sans Condensed','DejaVu Sans','Liberation Sans',sans-serif;font-size:12.3px;color:#ff0000;transform:scaleX(0.8500);transform-origin:0 0;-webkit-text-stroke:0.25px #ff0000;">15...</span>
<span class="t" style="left:20.50px;top:123.00px;font-family:'DejaVu Sans Condensed','DejaVu Sans','Liberation Sans',sans-serif;font-size:11.5px;color:#000;">BITCOINC</span>
<span class="t" style="left:145.60px;top:123.00px;font-family:'DejaVu Sans Condensed','DejaVu Sans','Liberation Sans',sans-serif;font-size:12.3px;color:#0000ff;transform:scaleX(0.8500);transform-origin:0 0;-webkit-text-stroke:0.25px #0000ff;">628.00</span>
<span class="t" style="left:217.60px;top:123.00px;font-family:'DejaVu Sans Condensed','DejaVu Sans','Liberation Sans',sans-serif;font-size:12.3px;color:#0000ff;transform:scaleX(0.8500);transform-origin:0 0;-webkit-text-stroke:0.25px #0000ff;">629.30</span>
<span class="t" style="left:268.54px;top:123.00px;font-family:'DejaVu Sans Condensed','DejaVu Sans','Liberation Sans',sans-serif;font-size:12.3px;color:#0000ff;transform:scaleX(0.8500);transform-origin:0 0;-webkit-text-stroke:0.25px #0000ff;">130</span>
<span class="t" style="left:20.50px;top:143.00px;font-family:'DejaVu Sans Condensed','DejaVu Sans','Liberation Sans',sans-serif;font-size:11.5px;color:#000;">UNISWAP</span>
<span class="t" style="left:151.58px;top:143.00px;font-family:'DejaVu Sans Condensed','DejaVu Sans','Liberation Sans',sans-serif;font-size:12.3px;color:#ff0000;transform:scaleX(0.8500);transform-origin:0 0;-webkit-text-stroke:0.25px #ff0000;">5.659</span>
<span class="t" style="left:223.58px;top:143.00px;font-family:'DejaVu Sans Condensed','DejaVu Sans','Liberation Sans',sans-serif;font-size:12.3px;color:#ff0000;transform:scaleX(0.8500);transform-origin:0 0;-webkit-text-stroke:0.25px #ff0000;">5.671</span>
<span class="t" style="left:274.53px;top:143.00px;font-family:'DejaVu Sans Condensed','DejaVu Sans','Liberation Sans',sans-serif;font-size:12.3px;color:#ff0000;transform:scaleX(0.8500);transform-origin:0 0;-webkit-text-stroke:0.25px #ff0000;">12</span>
<span class="t" style="left:20.50px;top:163.00px;font-family:'DejaVu Sans Condensed','DejaVu Sans','Liberation Sans',sans-serif;font-size:11.5px;color:#fff;font-weight:bold;">SOLANA</span>
<span class="t" style="left:142.20px;top:163.00px;font-family:'DejaVu Sans Condensed','DejaVu Sans','Liberation Sans',sans-serif;font-size:12.3px;color:#fff;font-weight:bold;transform:scaleX(0.8500);transform-origin:0 0;-webkit-text-stroke:0.25px #fff;">135.83</span>
<span class="t" style="left:214.20px;top:163.00px;font-family:'DejaVu Sans Condensed','DejaVu Sans','Liberation Sans',sans-serif;font-size:12.3px;color:#fff;font-weight:bold;transform:scaleX(0.8500);transform-origin:0 0;-webkit-text-stroke:0.25px #fff;">136.07</span>
<span class="t" style="left:273.40px;top:163.00px;font-family:'DejaVu Sans Condensed','DejaVu Sans','Liberation Sans',sans-serif;font-size:12.3px;color:#fff;font-weight:bold;transform:scaleX(0.8500);transform-origin:0 0;-webkit-text-stroke:0.25px #fff;">24</span>
<span class="t" style="left:20.50px;top:183.00px;font-family:'DejaVu Sans Condensed','DejaVu Sans','Liberation Sans',sans-serif;font-size:11.5px;color:#000;">TRON</span>
<span class="t" style="left:139.61px;top:183.00px;font-family:'DejaVu Sans Condensed','DejaVu Sans','Liberation Sans',sans-serif;font-size:12.3px;color:#ff0000;transform:scaleX(0.8500);transform-origin:0 0;-webkit-text-stroke:0.25px #ff0000;">0.29751</span>
<span class="t" style="left:211.61px;top:183.00px;font-family:'DejaVu Sans Condensed','DejaVu Sans','Liberation Sans',sans-serif;font-size:12.3px;color:#ff0000;transform:scaleX(0.8500);transform-origin:0 0;-webkit-text-stroke:0.25px #ff0000;">0.29794</span>
<span class="t" style="left:274.53px;top:183.00px;font-family:'DejaVu Sans Condensed','DejaVu Sans','Liberation Sans',sans-serif;font-size:12.3px;color:#ff0000;transform:scaleX(0.8500);transform-origin:0 0;-webkit-text-stroke:0.25px #ff0000;">43</span>
<span class="t" style="left:20.50px;top:203.00px;font-family:'DejaVu Sans Condensed','DejaVu Sans','Liberation Sans',sans-serif;font-size:11.5px;color:#000;">SUI</span>
<span class="t" style="left:145.60px;top:203.00px;font-family:'DejaVu Sans Condensed','DejaVu Sans','Liberation Sans',sans-serif;font-size:12.3px;color:#0000ff;transform:scaleX(0.8500);transform-origin:0 0;-webkit-text-stroke:0.25px #0000ff;">1.8100</span>
<span class="t" style="left:217.60px;top:203.00px;font-family:'DejaVu Sans Condensed','DejaVu Sans','Liberation Sans',sans-serif;font-size:12.3px;color:#0000ff;transform:scaleX(0.8500);transform-origin:0 0;-webkit-text-stroke:0.25px #0000ff;">1.8133</span>
<span class="t" style="left:274.53px;top:203.00px;font-family:'DejaVu Sans Condensed','DejaVu Sans','Liberation Sans',sans-serif;font-size:12.3px;color:#0000ff;transform:scaleX(0.8500);transform-origin:0 0;-webkit-text-stroke:0.25px #0000ff;">33</span>
</div>
<div style="left:302px;top:96px;width:18px;height:238px;background:#f0f0f0;"></div>
<div style="left:302px;top:96px;width:1px;height:238px;background:#f7f7f7;"></div>
<svg class="ic" style="left:307px;top:103px" width="8" height="4" viewBox="0 0 8 4"><path d="M0 4l4-4 4 4z" fill="#444"/></svg>
<svg class="ic" style="left:307px;top:324px" width="8" height="4" viewBox="0 0 8 4"><path d="M0 0l4 4 4-4z" fill="#444"/></svg>
<div class="sthumb" style="left:303px;top:144px;width:15px;height:41px"></div>
<div style="left:307px;top:160px;width:7px;height:1px;background:#555;"></div>
<div style="left:307px;top:161px;width:7px;height:1px;background:#fff;"></div>
<div style="left:307px;top:163px;width:7px;height:1px;background:#555;"></div>
<div style="left:307px;top:164px;width:7px;height:1px;background:#fff;"></div>
<div style="left:307px;top:166px;width:7px;height:1px;background:#555;"></div>
<div style="left:307px;top:167px;width:7px;height:1px;background:#fff;"></div>
<div style="left:11px;top:334px;width:309px;height:1px;background:#000;"></div>
<div class="tab" style="left:14px;top:334px;width:73px;height:20px"></div>
<span class="t" style="left:25.00px;top:338.00px;font-family:'DejaVu Sans Condensed','DejaVu Sans','Liberation Sans',sans-serif;font-size:11px;color:#000;letter-spacing:0.737px;">Символы</span>
<span class="t" style="left:98.00px;top:338.00px;font-family:'DejaVu Sans Condensed','DejaVu Sans','Liberation Sans',sans-serif;font-size:11px;color:#777;letter-spacing:0.347px;">Тиковый график</span>
<div style="left:199px;top:338px;width:1px;height:13px;background:#555;"></div>
<div style="left:11px;top:335px;width:1px;height:20px;background:#a0a0a0;"></div>
<div class="phead" style="left:11px;top:362px;width:295px;height:13px"></div>
<span class="t" style="left:13.50px;top:362.00px;font-family:'DejaVu Sans Condensed','DejaVu Sans','Liberation Sans',sans-serif;font-size:11px;color:#50555c;letter-spacing:-0.238px;">Навигатор</span>
<svg class="ic" style="left:310.5px;top:366px" width="7" height="6" viewBox="0 0 7 6"><path d="M0.800 0.600l5 4.800M5.800 0.600l-5 4.800" stroke="#000" stroke-width="1.6"/></svg>
<div style="left:11px;top:376px;width:309px;height:1px;background:#a0a0a0;"></div>
<div style="left:11px;top:376px;width:1px;height:66px;background:#a0a0a0;"></div>
<div style="left:12px;top:377px;width:308px;height:46px;background:#fff;"></div>
<div style="left:302px;top:377px;width:18px;height:46px;background:#f0f0f0;"></div>
<svg class="ic" style="left:307px;top:385px" width="8" height="4" viewBox="0 0 8 4"><path d="M0 4l4-4 4 4z" fill="#444"/></svg>
<svg class="ic" style="left:307px;top:412px" width="8" height="4" viewBox="0 0 8 4"><path d="M0 0l4 4 4-4z" fill="#444"/></svg>
<div style="left:12px;top:377px;width:290px;height:46px;overflow:hidden">
<div style="left:13px;top:0;width:1px;height:46px;background:repeating-linear-gradient(180deg,#888 0,#888 1px,transparent 1px,transparent 2px)"></div>
<div style="left:34px;top:0;width:1px;height:46px;background:repeating-linear-gradient(180deg,#888 0,#888 1px,transparent 1px,transparent 2px)"></div>
<div style="left:35px;top:11px;width:11px;height:1px;background:repeating-linear-gradient(90deg,#888 0,#888 1px,transparent 1px,transparent 2px)"></div>
<svg class="ic" style="left:47px;top:2px" width="17" height="16" viewBox="0 0 17 16"><path d="M4.300 7.500q0.700 5 4.200 5.300 3.500-0.300 4-5.300z" fill="#f7d44c" stroke="#c9a227" stroke-width="0.7"/><path d="M10 12.500l2.600-2.600 2.600 2.600-2.600 2.600z" fill="#f9e27a" stroke="#c9a227" stroke-width="0.7"/><ellipse cx="8" cy="5.800" rx="7.600" ry="3" fill="#3f97de" stroke="#2a7ac8" stroke-width="0.7"/><path d="M4 4.800q1-4.300 4-4.300t4 4.300q-4 1.500-8 0z" fill="#6cb4f0" stroke="#2a7ac8" stroke-width="0.6"/></svg>
<span class="t" style="left:69.50px;top:3.00px;font-family:'DejaVu Sans Condensed','DejaVu Sans','Liberation Sans',sans-serif;font-size:11.5px;color:#000;">Panel</span>
<div style="left:35px;top:29px;width:11px;height:1px;background:repeating-linear-gradient(90deg,#888 0,#888 1px,transparent 1px,transparent 2px)"></div>
<svg class="ic" style="left:47px;top:20px" width="17" height="16" viewBox="0 0 17 16"><path d="M4.300 7.500q0.700 5 4.200 5.300 3.500-0.300 4-5.300z" fill="#f7d44c" stroke="#c9a227" stroke-width="0.7"/><path d="M10 12.500l2.600-2.600 2.600 2.600-2.600 2.600z" fill="#f9e27a" stroke="#c9a227" stroke-width="0.7"/><ellipse cx="8" cy="5.800" rx="7.600" ry="3" fill="#3f97de" stroke="#2a7ac8" stroke-width="0.7"/><path d="M4 4.800q1-4.300 4-4.300t4 4.300q-4 1.500-8 0z" fill="#6cb4f0" stroke="#2a7ac8" stroke-width="0.6"/></svg>
<span class="t" style="left:69.50px;top:21.00px;font-family:'DejaVu Sans Condensed','DejaVu Sans','Liberation Sans',sans-serif;font-size:11.5px;color:#000;">Railis</span>
<div style="left:35px;top:47px;width:11px;height:1px;background:repeating-linear-gradient(90deg,#888 0,#888 1px,transparent 1px,transparent 2px)"></div>
<svg class="ic" style="left:47px;top:38px" width="17" height="16" viewBox="0 0 17 16"><path d="M4.300 7.500q0.700 5 4.200 5.300 3.500-0.300 4-5.300z" fill="#f7d44c" stroke="#c9a227" stroke-width="0.7"/><path d="M10 12.500l2.600-2.600 2.600 2.600-2.600 2.600z" fill="#f9e27a" stroke="#c9a227" stroke-width="0.7"/><ellipse cx="8" cy="5.800" rx="7.600" ry="3" fill="#3f97de" stroke="#2a7ac8" stroke-width="0.7"/><path d="M4 4.800q1-4.300 4-4.300t4 4.300q-4 1.500-8 0z" fill="#6cb4f0" stroke="#2a7ac8" stroke-width="0.6"/></svg>
<span class="t" style="left:69.50px;top:39.00px;font-family:'DejaVu Sans Condensed','DejaVu Sans','Liberation Sans',sans-serif;font-size:11.5px;color:#000;">ras 1</span>
</div>
<div style="left:11px;top:423px;width:309px;height:1px;background:#000;"></div>
<div class="tab" style="left:14px;top:423px;width:60px;height:20px"></div>
<span class="t" style="left:25.00px;top:427.00px;font-family:'DejaVu Sans Condensed','DejaVu Sans','Liberation Sans',sans-serif;font-size:11px;color:#000;letter-spacing:0.653px;">Общие</span>
<span class="t" style="left:85.00px;top:427.00px;font-family:'DejaVu Sans Condensed','DejaVu Sans','Liberation Sans',sans-serif;font-size:11px;color:#777;letter-spacing:0.422px;">Избранное</span>
<div style="left:155px;top:427px;width:1px;height:13px;background:#555;"></div>
<div style="left:8px;top:446px;width:316px;height:1px;background:#fff;"></div>
<div style="left:8px;top:447px;width:316px;height:1px;background:#a0a0a0;"></div>
<div style="left:8px;top:448px;width:1015px;height:2px;background:#f0f0f0;"></div>
<div style="left:325px;top:79px;width:698px;height:348px;background:#000;"></div>
<div style="left:325px;top:427px;width:698px;height:2px;background:#fff;"></div>
<div style="left:325px;top:79px;width:698px;height:1px;background:#696969;"></div>
<svg class="ic" style="left:325px;top:80px" width="698" height="348" viewBox="325 80 698 348"><defs><clipPath id="cc"><rect x="328" y="83" width="657" height="323"/></clipPath></defs><rect x="327.500" y="82.500" width="658" height="324" fill="none" stroke="#fff"/><g clip-path="url(#cc)"><path d="M328 212.500H985" stroke="#778899" stroke-width="1"/><g transform="translate(347.2 118.3)"><circle r="9.700" fill="#8b7d6b" stroke="#748294" stroke-width="1.200"/></g><g transform="translate(342.2 112.5)"><circle r="9.700" fill="#8b7d6b" stroke="#748294" stroke-width="1.200"/></g><g transform="translate(379.7 139.1)"><circle r="9.700" fill="#8b7d6b" stroke="#748294" stroke-width="1.200"/></g><g transform="translate(375 136.6)"><circle r="9.700" fill="#8b7d6b" stroke="#748294" stroke-width="1.200"/></g><g transform="translate(387 175.3)"><circle r="9.700" fill="#8b7d6b" stroke="#748294" stroke-width="1.200"/></g><g transform="translate(382.35 178.5)"><circle r="9.700" fill="#8b7d6b" stroke="#748294" stroke-width="1.200"/></g><g transform="translate(434.7 183.4)"><circle r="9.700" fill="#8b7d6b" stroke="#748294" stroke-width="1.200"/></g><g transform="translate(430 179.2)"><circle r="9.700" fill="#8b7d6b" stroke="#748294" stroke-width="1.200"/></g><g transform="translate(459.1 169.7)"><circle r="9.700" fill="#8b7d6b" stroke="#748294" stroke-width="1.200"/></g><g transform="translate(454 165.9)"><circle r="9.700" fill="#8b7d6b" stroke="#748294" stroke-width="1.200"/></g><g transform="translate(466.7 188.7)"><circle r="9.700" fill="#8b7d6b" stroke="#748294" stroke-width="1.200"/></g><g transform="translate(462 191.5)"><circle r="9.700" fill="#8b7d6b" stroke="#748294" stroke-width="1.200"/></g><g transform="translate(393.7 195.1)"><circle r="9.700" fill="#8b7d6b" stroke="#748294" stroke-width="1.200"/></g><g transform="translate(389 192.6)"><circle r="9.700" fill="#8b7d6b" stroke="#748294" stroke-width="1.200"/></g><g transform="translate(394.7 210.1)"><circle r="9.700" fill="#8b7d6b" stroke="#748294" stroke-width="1.200"/></g><g transform="translate(390 207.6)"><circle r="9.700" fill="#8b7d6b" stroke="#748294" stroke-width="1.200"/></g><g transform="translate(410.7 210.8)"><circle r="9.700" fill="#8b7d6b" stroke="#748294" stroke-width="1.200"/></g><g transform="translate(406 208.3)"><circle r="9.700" fill="#8b7d6b" stroke="#748294" stroke-width="1.200"/></g><g transform="translate(459.2 210.8)"><circle r="9.700" fill="#8b7d6b" stroke="#748294" stroke-width="1.200"/></g><g transform="translate(454.5 208.3)"><circle r="9.700" fill="#8b7d6b" stroke="#748294" stroke-width="1.200"/></g><g transform="translate(475.5 219.3)"><circle r="9.700" fill="#8b7d6b" stroke="#748294" stroke-width="1.200"/></g><g transform="translate(470.8 216.8)"><circle r="9.700" fill="#8b7d6b" stroke="#748294" stroke-width="1.200"/></g><g transform="translate(396 234.9)"><circle r="9.700" fill="#8b7d6b" stroke="#748294" stroke-width="1.200"/></g><g transform="translate(391.3 232.4)"><circle r="9.700" fill="#8b7d6b" stroke="#748294" stroke-width="1.200"/></g><g transform="translate(403.2 238.5)"><circle r="9.700" fill="#8b7d6b" stroke="#748294" stroke-width="1.200"/></g><g transform="translate(398.5 236)"><circle r="9.700" fill="#8b7d6b" stroke="#748294" stroke-width="1.200"/></g><g transform="translate(386 247.7)"><circle r="9.700" fill="#8b7d6b" stroke="#748294" stroke-width="1.200"/></g><g transform="translate(381.3 245.2)"><circle r="9.700" fill="#8b7d6b" stroke="#748294" stroke-width="1.200"/></g><g transform="translate(482.6 251.1)"><circle r="9.700" fill="#8b7d6b" stroke="#748294" stroke-width="1.200"/></g><g transform="translate(477.9 248.6)"><circle r="9.700" fill="#8b7d6b" stroke="#748294" stroke-width="1.200"/></g><g transform="translate(403.2 262.8)"><circle r="9.700" fill="#8b7d6b" stroke="#748294" stroke-width="1.200"/></g><g transform="translate(398.5 260.3)"><circle r="9.700" fill="#8b7d6b" stroke="#748294" stroke-width="1.200"/></g><g transform="translate(482.4 256.2)"><circle r="9.700" fill="#8b7d6b" stroke="#748294" stroke-width="1.200"/></g><g transform="translate(477.7 253.7)"><circle r="9.700" fill="#8b7d6b" stroke="#748294" stroke-width="1.200"/></g><g transform="translate(480.7 278.4)"><circle r="9.700" fill="#8b7d6b" stroke="#748294" stroke-width="1.200"/></g><g transform="translate(476 275.9)"><circle r="9.700" fill="#8b7d6b" stroke="#748294" stroke-width="1.200"/></g><g transform="translate(491.2 273.7)"><circle r="9.700" fill="#8b7d6b" stroke="#748294" stroke-width="1.200"/></g><g transform="translate(486.5 271.2)"><circle r="9.700" fill="#8b7d6b" stroke="#748294" stroke-width="1.200"/></g><g transform="translate(490 286.5)"><circle r="9.700" fill="#8b7d6b" stroke="#748294" stroke-width="1.200"/></g><g transform="translate(485.3 284)"><circle r="9.700" fill="#8b7d6b" stroke="#748294" stroke-width="1.200"/></g><g transform="translate(507.2 282.1)"><circle r="9.700" fill="#8b7d6b" stroke="#748294" stroke-width="1.200"/></g><g transform="translate(502.5 279.6)"><circle r="9.700" fill="#8b7d6b" stroke="#748294" stroke-width="1.200"/></g><g transform="translate(522.6 274.9)"><circle r="9.700" fill="#8b7d6b" stroke="#748294" stroke-width="1.200"/></g><g transform="translate(517.9 272.4)"><circle r="9.700" fill="#8b7d6b" stroke="#748294" stroke-width="1.200"/></g><g transform="translate(555.2 261.6)"><circle r="9.700" fill="#8b7d6b" stroke="#748294" stroke-width="1.200"/></g><g transform="translate(550.5 259.1)"><circle r="9.700" fill="#8b7d6b" stroke="#748294" stroke-width="1.200"/></g><g transform="translate(555.2 291.4)"><circle r="9.700" fill="#8b7d6b" stroke="#748294" stroke-width="1.200"/></g><g transform="translate(550.5 288.9)"><circle r="9.700" fill="#8b7d6b" stroke="#748294" stroke-width="1.200"/></g><g transform="translate(482.2 301.7)"><circle r="9.700" fill="#8b7d6b" stroke="#748294" stroke-width="1.200"/></g><g transform="translate(477.5 299.2)"><circle r="9.700" fill="#8b7d6b" stroke="#748294" stroke-width="1.200"/></g><g transform="translate(506.9 305.1)"><circle r="9.700" fill="#8b7d6b" stroke="#748294" stroke-width="1.200"/></g><g transform="translate(502.2 302.6)"><circle r="9.700" fill="#8b7d6b" stroke="#748294" stroke-width="1.200"/></g><g transform="translate(539.2 301.6)"><circle r="9.700" fill="#8b7d6b" stroke="#748294" stroke-width="1.200"/></g><g transform="translate(534.5 299.1)"><circle r="9.700" fill="#8b7d6b" stroke="#748294" stroke-width="1.200"/></g><g transform="translate(544.8 299.4)"><circle r="9.700" fill="#8b7d6b" stroke="#748294" stroke-width="1.200"/></g><g transform="translate(540.1 296.9)"><circle r="9.700" fill="#8b7d6b" stroke="#748294" stroke-width="1.200"/></g><g transform="translate(521.5 307.5)"><circle r="9.700" fill="#8b7d6b" stroke="#748294" stroke-width="1.200"/></g><g transform="translate(516.8 305)"><circle r="9.700" fill="#8b7d6b" stroke="#748294" stroke-width="1.200"/></g><g transform="translate(489.6 314.1)"><circle r="9.700" fill="#8b7d6b" stroke="#748294" stroke-width="1.200"/></g><g transform="translate(484.9 311.6)"><circle r="9.700" fill="#8b7d6b" stroke="#748294" stroke-width="1.200"/></g><g transform="translate(522.9 311.6)"><circle r="9.700" fill="#8b7d6b" stroke="#748294" stroke-width="1.200"/></g><g transform="translate(518.2 309.1)"><circle r="9.700" fill="#8b7d6b" stroke="#748294" stroke-width="1.200"/></g><g transform="translate(514.2 326.9)"><circle r="9.700" fill="#8b7d6b" stroke="#748294" stroke-width="1.200"/></g><g transform="translate(509.5 324.4)"><circle r="9.700" fill="#8b7d6b" stroke="#748294" stroke-width="1.200"/></g><g transform="translate(546.7 328.6)"><circle r="9.700" fill="#8b7d6b" stroke="#748294" stroke-width="1.200"/></g><g transform="translate(542 326.1)"><circle r="9.700" fill="#8b7d6b" stroke="#748294" stroke-width="1.200"/></g><g transform="translate(546.7 343.1)"><circle r="9.700" fill="#8b7d6b" stroke="#748294" stroke-width="1.200"/></g><g transform="translate(542 340.6)"><circle r="9.700" fill="#8b7d6b" stroke="#748294" stroke-width="1.200"/></g><g transform="translate(507.5 351.6)"><circle r="9.700" fill="#8b7d6b" stroke="#748294" stroke-width="1.200"/></g><g transform="translate(502.8 349.1)"><circle r="9.700" fill="#8b7d6b" stroke="#748294" stroke-width="1.200"/></g><g transform="translate(514.2 346.5)"><circle r="9.700" fill="#8b7d6b" stroke="#748294" stroke-width="1.200"/></g><g transform="translate(509.5 344)"><circle r="9.700" fill="#8b7d6b" stroke="#748294" stroke-width="1.200"/></g><g transform="translate(546.7 366.8)"><circle r="9.700" fill="#8b7d6b" stroke="#748294" stroke-width="1.200"/></g><g transform="translate(542 368.4)"><circle r="9.700" fill="#8b7d6b" stroke="#748294" stroke-width="1.200"/></g><g transform="translate(515.4 386.4)"><circle r="9.700" fill="#8b7d6b" stroke="#748294" stroke-width="1.200"/></g><g transform="translate(510.5 389.9)"><circle r="9.700" fill="#8b7d6b" stroke="#748294" stroke-width="1.200"/></g><g transform="translate(549.2 313.1)"><circle r="9.700" fill="#8b7d6b" stroke="#748294" stroke-width="1.200"/></g><g transform="translate(544.5 310.6)"><circle r="9.700" fill="#8b7d6b" stroke="#748294" stroke-width="1.200"/></g><g transform="translate(602.8 263.7)"><circle r="9.700" fill="#8b7d6b" stroke="#748294" stroke-width="1.200"/></g><g transform="translate(598.1 261.2)"><circle r="9.700" fill="#8b7d6b" stroke="#748294" stroke-width="1.200"/></g><g transform="translate(602.8 290.7)"><circle r="9.700" fill="#8b7d6b" stroke="#748294" stroke-width="1.200"/></g><g transform="translate(598.1 288.2)"><circle r="9.700" fill="#8b7d6b" stroke="#748294" stroke-width="1.200"/></g><g transform="translate(635 234.1)"><circle r="9.700" fill="#8b7d6b" stroke="#748294" stroke-width="1.200"/></g><g transform="translate(630.3 231.6)"><circle r="9.700" fill="#8b7d6b" stroke="#748294" stroke-width="1.200"/></g><g transform="translate(683.2 158.1)"><circle r="9.700" fill="#8b7d6b" stroke="#748294" stroke-width="1.200"/></g><g transform="translate(678.5 155.6)"><circle r="9.700" fill="#8b7d6b" stroke="#748294" stroke-width="1.200"/></g><g transform="translate(666.9 193.3)"><circle r="9.700" fill="#8b7d6b" stroke="#748294" stroke-width="1.200"/></g><g transform="translate(662.2 190.8)"><circle r="9.700" fill="#8b7d6b" stroke="#748294" stroke-width="1.200"/></g><g transform="translate(707 193.3)"><circle r="9.700" fill="#8b7d6b" stroke="#748294" stroke-width="1.200"/></g><g transform="translate(702.3 190.8)"><circle r="9.700" fill="#8b7d6b" stroke="#748294" stroke-width="1.200"/></g><g transform="translate(771.2 224.6)"><circle r="9.700" fill="#8b7d6b" stroke="#748294" stroke-width="1.200"/></g><g transform="translate(766.5 222.1)"><circle r="9.700" fill="#8b7d6b" stroke="#748294" stroke-width="1.200"/></g><g transform="translate(834.6 200.7)"><circle r="9.700" fill="#8b7d6b" stroke="#748294" stroke-width="1.200"/></g><g transform="translate(830.4 191.1)"><circle r="9.700" fill="#8b7d6b" stroke="#748294" stroke-width="1.200"/></g><g transform="translate(331.5 150.5)"><circle r="9.700" fill="#8b7d6b" stroke="#748294" stroke-width="1.200"/></g><path d="M328.5 127V153M326 130.5h2M329 134.5h2M336.5 128V153M334 134.5h2M337 146.5h2M344.5 120V157M342 146.5h2M345 142.5h2M352.5 99V135M350 128.5h2M353 119.5h2M360.5 99V126M358 107.5h2M361 122.5h2M368.5 101V130M366 122.5h2M369 110.5h2M376.5 103V149M374 110.5h2M377 147.5h2M384.5 138V197M382 147.5h2M385 190.5h2M392.5 186V245M390 190.5h2M393 230.5h2M400.5 225V268M398 230.5h2M401 240.5h2M408.5 206V262M406 240.5h2M409 221.5h2M416.5 205V231M414 221.5h2M417 206.5h2M424.5 193V213M422 205.5h2M425 193.5h2M432.5 184V208M430 193.5h2M433 205.5h2M440.5 177V201M438 199.5h2M441 186.5h2M448.5 176V206M446 186.5h2M449 193.5h2M456.5 148V222M454 193.5h2M457 154.5h2M464.5 140V193M462 152.5h2M465 186.5h2M472.5 180V239M470 186.5h2M473 237.5h2M480.5 236V301M478 237.5h2M481 262.5h2M488.5 257V293M486 262.5h2M489 270.5h2M496.5 245V288M494 262.5h2M497 280.5h2M504.5 276V369M502 280.5h2M505 330.5h2M512.5 288V400M510 330.5h2M513 310.5h2M520.5 268V332M518 310.5h2M521 290.5h2M528.5 265V292M526 290.5h2M529 271.5h2M536.5 268V312M534 277.5h2M537 300.5h2M544.5 296V381M542 300.5h2M545 320.5h2M552.5 267V310M550 308.5h2M553 270.5h2M560.5 246V276M558 270.5h2M561 252.5h2M568.5 237V269M566 252.5h2M569 250.5h2M576.5 230V254M574 250.5h2M577 243.5h2M584.5 234V257M582 243.5h2M585 236.5h2M592.5 236V265M590 236.5h2M593 263.5h2M600.5 255V293M598 263.5h2M601 262.5h2M608.5 246V269M606 260.5h2M609 249.5h2M616.5 248V281M614 249.5h2M617 278.5h2M624.5 241V279M622 278.5h2M625 243.5h2M632.5 226V254M630 243.5h2M633 232.5h2M640.5 212V243M638 232.5h2M641 219.5h2M648.5 214V253M646 217.5h2M649 227.5h2M656.5 203V240M654 228.5h2M657 204.5h2M664.5 180V231M662 204.5h2M665 190.5h2M672.5 176V200M670 190.5h2M673 184.5h2M680.5 150V189M678 184.5h2M681 169.5h2M688.5 168V183M686 169.5h2M689 176.5h2M696.5 157V181M694 176.5h2M697 176.5h2M704.5 176V201M702 176.5h2M705 186.5h2M712.5 171V200M710 186.5h2M713 172.5h2M720.5 169V184M718 172.5h2M721 180.5h2M728.5 178V205M726 180.5h2M729 191.5h2M736.5 187V216M734 191.5h2M737 199.5h2M744.5 179V210M742 199.5h2M745 186.5h2M752.5 171V190M750 186.5h2M753 178.5h2M760.5 173V189M758 177.5h2M761 182.5h2M768.5 182V223M766 182.5h2M769 215.5h2M776.5 210V227M774 215.5h2M777 224.5h2M784.5 209V235M782 225.5h2M785 225.5h2M792.5 216V232M790 226.5h2M793 218.5h2M800.5 213V228M798 218.5h2M801 226.5h2M808.5 213V243M806 226.5h2M809 222.5h2M816.5 218V236M814 222.5h2M817 225.5h2M824.5 217V250M822 226.5h2M825 243.5h2M832.5 196V245M830 243.5h2M833 202.5h2M840.5 191V217M838 202.5h2M841 212.5h2" stroke="#00ff00" stroke-width="1" fill="none" shape-rendering="crispEdges"/><path d="M328 191.5H985M328 194.5H985M328 260.5H985M328 288.5H985M328 340.5H985" stroke="#32cd32" stroke-width="1" stroke-dasharray="9 6 3 6" fill="none" shape-rendering="crispEdges"/></g></svg>
<span class="t" style="left:903.50px;top:89.00px;font-family:'Liberation Sans','DejaVu Sans',sans-serif;font-size:13px;color:#fff;letter-spacing:-0.133px;">Railis</span>
<span class="t" style="left:840.14px;top:104.00px;font-family:'Liberation Sans','DejaVu Sans',sans-serif;font-size:13px;color:#ff0000;letter-spacing:0.143px;">Magic Number = 11111</span>
<span class="t" style="left:893.42px;top:119.00px;font-family:'Liberation Sans','DejaVu Sans',sans-serif;font-size:13px;color:#ff0000;letter-spacing:-0.081px;">Spread = 0.22</span>
<span class="t" style="left:886.56px;top:134.00px;font-family:'Liberation Sans','DejaVu Sans',sans-serif;font-size:13px;color:#ff0000;letter-spacing:0.061px;">Min Dist = 2.00</span>
<span class="t" style="left:770.49px;top:149.00px;font-family:'Liberation Sans','DejaVu Sans',sans-serif;font-size:13px;color:#ff0000;letter-spacing:-0.005px;">Account Free Margin = 8336.45941</span>
<span class="t" style="left:825.97px;top:164.00px;font-family:'Liberation Sans','DejaVu Sans',sans-serif;font-size:13px;color:#ff0000;letter-spacing:-0.030px;">Fixed Profit = 7337.40607</span>
<span class="t" style="left:825.92px;top:179.00px;font-family:'Liberation Sans','DejaVu Sans',sans-serif;font-size:13px;color:#ff0000;letter-spacing:-0.084px;">Current Profit = -76.41994</span>
<span class="t" style="left:334.50px;top:182.50px;font-family:'Liberation Sans','DejaVu Sans',sans-serif;font-size:10px;color:#fff;transform:scaleX(0.9876);transform-origin:0 0;">#8054 sell 0.01</span>
<span class="t" style="left:334.50px;top:179.50px;font-family:'Liberation Sans','DejaVu Sans',sans-serif;font-size:10px;color:#fff;transform:scaleX(0.9572);transform-origin:0 0;">#8055 buy 0.01</span>
<span class="t" style="left:334.50px;top:248.50px;font-family:'Liberation Sans','DejaVu Sans',sans-serif;font-size:10px;color:#fff;transform:scaleX(0.9572);transform-origin:0 0;">#8042 buy 0.01</span>
<span class="t" style="left:334.50px;top:276.50px;font-family:'Liberation Sans','DejaVu Sans',sans-serif;font-size:10px;color:#fff;transform:scaleX(0.9572);transform-origin:0 0;">#8037 buy 0.01</span>
<span class="t" style="left:334.50px;top:328.50px;font-family:'Liberation Sans','DejaVu Sans',sans-serif;font-size:10px;color:#fff;transform:scaleX(0.9572);transform-origin:0 0;">#8031 buy 0.01</span>
<svg class="ic" style="left:325px;top:80px" width="698" height="348" viewBox="325 80 698 348"><g clip-path="url(#cc)"><g transform="translate(343.7 113.6)"><path d="M-5.500 -6h2.600l3.700 5.300v1.500l-3.700 5h-2.600z" fill="#fff"/><path d="M-5.100 -2.200h2.100v-3.100l3.700 5.200-3.700 5v-3.100h-2.100z" fill="#008000"/><path d="M-5 -4.700h1.300v1.700h-1.300zM-5 3.400h1.300v1.300h-1.300z" fill="#008000"/></g><g transform="translate(344 117.5)"><path d="M-0.100 0.800l5.800-5v10z" fill="#fff"/><path d="M0.800 0.800l4.300-4v8z" fill="#daa520"/></g><g transform="translate(376.5 137.7)"><path d="M-5.500 -6h2.600l3.700 5.300v1.500l-3.700 5h-2.600z" fill="#fff"/><path d="M-5.100 -2.200h2.100v-3.100l3.700 5.200-3.700 5v-3.100h-2.100z" fill="#008000"/><path d="M-5 -4.700h1.300v1.700h-1.300zM-5 3.400h1.300v1.300h-1.300z" fill="#008000"/></g><g transform="translate(376.5 138.3)"><path d="M-0.100 0.800l5.800-5v10z" fill="#fff"/><path d="M0.800 0.800l4.300-4v8z" fill="#daa520"/></g><g transform="translate(383.85 179.6)"><path d="M-5.500 -6h2.600l3.700 5.300v1.500l-3.700 5h-2.600z" fill="#fff"/><path d="M-5.100 -2.200h2.100v-3.100l3.700 5.200-3.700 5v-3.100h-2.100z" fill="#008000"/><path d="M-5 -4.700h1.300v1.700h-1.300zM-5 3.400h1.300v1.300h-1.300z" fill="#008000"/></g><g transform="translate(383.8 174.5)"><path d="M-0.100 0.800l5.800-5v10z" fill="#fff"/><path d="M0.800 0.800l4.300-4v8z" fill="#daa520"/></g><g transform="translate(431.5 180.3)"><path d="M-5.500 -6h2.600l3.700 5.300v1.500l-3.700 5h-2.600z" fill="#fff"/><path d="M-5.100 -2.200h2.100v-3.100l3.700 5.200-3.700 5v-3.100h-2.100z" fill="#008000"/><path d="M-5 -4.700h1.300v1.700h-1.300zM-5 3.400h1.300v1.300h-1.300z" fill="#008000"/></g><g transform="translate(431.5 182.6)"><path d="M-0.100 0.800l5.800-5v10z" fill="#fff"/><path d="M0.800 0.800l4.300-4v8z" fill="#daa520"/></g><g transform="translate(455.5 167)"><path d="M-5.500 -6h2.600l3.700 5.300v1.500l-3.700 5h-2.600z" fill="#fff"/><path d="M-5.100 -2.200h2.100v-3.100l3.700 5.200-3.700 5v-3.100h-2.100z" fill="#008000"/><path d="M-5 -4.700h1.300v1.700h-1.300zM-5 3.400h1.300v1.300h-1.300z" fill="#008000"/></g><g transform="translate(455.9 168.9)"><path d="M-0.100 0.800l5.800-5v10z" fill="#fff"/><path d="M0.800 0.800l4.300-4v8z" fill="#daa520"/></g><g transform="translate(463.5 192.6)"><path d="M-5.500 -6h2.600l3.700 5.300v1.500l-3.700 5h-2.600z" fill="#fff"/><path d="M-5.100 -2.200h2.100v-3.100l3.700 5.200-3.700 5v-3.100h-2.100z" fill="#008000"/><path d="M-5 -4.700h1.300v1.700h-1.300zM-5 3.400h1.300v1.300h-1.300z" fill="#008000"/></g><g transform="translate(463.5 187.9)"><path d="M-0.100 0.800l5.800-5v10z" fill="#fff"/><path d="M0.800 0.800l4.300-4v8z" fill="#daa520"/></g><g transform="translate(390.5 193.7)"><path d="M-5.500 -6h2.600l3.700 5.300v1.500l-3.700 5h-2.600z" fill="#fff"/><path d="M-5.100 -2.200h2.100v-3.100l3.700 5.200-3.700 5v-3.100h-2.100z" fill="#008000"/><path d="M-5 -4.700h1.300v1.700h-1.300zM-5 3.400h1.300v1.300h-1.300z" fill="#008000"/></g><g transform="translate(390.5 194.3)"><path d="M-0.100 0.800l5.800-5v10z" fill="#fff"/><path d="M0.800 0.800l4.300-4v8z" fill="#daa520"/></g><g transform="translate(391.5 208.7)"><path d="M-5.500 -6h2.600l3.700 5.300v1.500l-3.700 5h-2.600z" fill="#fff"/><path d="M-5.100 -2.200h2.100v-3.100l3.700 5.200-3.700 5v-3.100h-2.100z" fill="#008000"/><path d="M-5 -4.700h1.300v1.700h-1.300zM-5 3.400h1.300v1.300h-1.300z" fill="#008000"/></g><g transform="translate(391.5 209.3)"><path d="M-0.100 0.800l5.800-5v10z" fill="#fff"/><path d="M0.800 0.800l4.300-4v8z" fill="#daa520"/></g><g transform="translate(407.5 209.4)"><path d="M-5.500 -6h2.600l3.700 5.300v1.500l-3.700 5h-2.600z" fill="#fff"/><path d="M-5.100 -2.200h2.100v-3.100l3.700 5.200-3.700 5v-3.100h-2.100z" fill="#008000"/><path d="M-5 -4.700h1.300v1.700h-1.300zM-5 3.400h1.300v1.300h-1.300z" fill="#008000"/></g><g transform="translate(407.5 210)"><path d="M-0.100 0.800l5.800-5v10z" fill="#fff"/><path d="M0.800 0.800l4.300-4v8z" fill="#daa520"/></g><g transform="translate(456 209.4)"><path d="M-5.500 -6h2.600l3.700 5.300v1.500l-3.700 5h-2.600z" fill="#fff"/><path d="M-5.100 -2.200h2.100v-3.100l3.700 5.200-3.700 5v-3.100h-2.100z" fill="#008000"/><path d="M-5 -4.700h1.300v1.700h-1.300zM-5 3.400h1.300v1.300h-1.300z" fill="#008000"/></g><g transform="translate(456 210)"><path d="M-0.100 0.800l5.800-5v10z" fill="#fff"/><path d="M0.800 0.800l4.300-4v8z" fill="#daa520"/></g><g transform="translate(472.3 217.9)"><path d="M-5.500 -6h2.600l3.700 5.300v1.500l-3.700 5h-2.600z" fill="#fff"/><path d="M-5.100 -2.200h2.100v-3.100l3.700 5.200-3.700 5v-3.100h-2.100z" fill="#008000"/><path d="M-5 -4.700h1.300v1.700h-1.300zM-5 3.400h1.300v1.300h-1.300z" fill="#008000"/></g><g transform="translate(472.3 218.5)"><path d="M-0.100 0.800l5.800-5v10z" fill="#fff"/><path d="M0.800 0.800l4.300-4v8z" fill="#daa520"/></g><g transform="translate(392.8 233.5)"><path d="M-5.500 -6h2.600l3.700 5.300v1.500l-3.700 5h-2.600z" fill="#fff"/><path d="M-5.100 -2.200h2.100v-3.100l3.700 5.200-3.700 5v-3.100h-2.100z" fill="#008000"/><path d="M-5 -4.700h1.300v1.700h-1.300zM-5 3.400h1.300v1.300h-1.300z" fill="#008000"/></g><g transform="translate(392.8 234.1)"><path d="M-0.100 0.800l5.800-5v10z" fill="#fff"/><path d="M0.800 0.800l4.300-4v8z" fill="#daa520"/></g><g transform="translate(400 237.1)"><path d="M-5.500 -6h2.600l3.700 5.300v1.500l-3.700 5h-2.600z" fill="#fff"/><path d="M-5.100 -2.200h2.100v-3.100l3.700 5.200-3.700 5v-3.100h-2.100z" fill="#008000"/><path d="M-5 -4.700h1.300v1.700h-1.300zM-5 3.400h1.300v1.300h-1.300z" fill="#008000"/></g><g transform="translate(400 237.7)"><path d="M-0.100 0.800l5.800-5v10z" fill="#fff"/><path d="M0.800 0.800l4.300-4v8z" fill="#daa520"/></g><g transform="translate(382.8 246.3)"><path d="M-5.500 -6h2.600l3.700 5.300v1.500l-3.700 5h-2.600z" fill="#fff"/><path d="M-5.100 -2.200h2.100v-3.100l3.700 5.200-3.700 5v-3.100h-2.100z" fill="#008000"/><path d="M-5 -4.700h1.300v1.700h-1.300zM-5 3.400h1.300v1.300h-1.300z" fill="#008000"/></g><g transform="translate(382.8 246.9)"><path d="M-0.100 0.800l5.800-5v10z" fill="#fff"/><path d="M0.800 0.800l4.300-4v8z" fill="#daa520"/></g><g transform="translate(479.4 249.7)"><path d="M-5.500 -6h2.600l3.700 5.300v1.500l-3.700 5h-2.600z" fill="#fff"/><path d="M-5.100 -2.200h2.100v-3.100l3.700 5.200-3.700 5v-3.100h-2.100z" fill="#008000"/><path d="M-5 -4.700h1.300v1.700h-1.300zM-5 3.400h1.300v1.300h-1.300z" fill="#008000"/></g><g transform="translate(479.4 250.3)"><path d="M-0.100 0.800l5.800-5v10z" fill="#fff"/><path d="M0.800 0.800l4.300-4v8z" fill="#daa520"/></g><g transform="translate(400 261.4)"><path d="M-5.500 -6h2.600l3.700 5.300v1.500l-3.700 5h-2.600z" fill="#fff"/><path d="M-5.100 -2.200h2.100v-3.100l3.700 5.200-3.700 5v-3.100h-2.100z" fill="#008000"/><path d="M-5 -4.700h1.300v1.700h-1.300zM-5 3.400h1.300v1.300h-1.300z" fill="#008000"/></g><g transform="translate(400 262)"><path d="M-0.100 0.800l5.800-5v10z" fill="#fff"/><path d="M0.800 0.800l4.300-4v8z" fill="#daa520"/></g><g transform="translate(479.2 254.8)"><path d="M-5.500 -6h2.600l3.700 5.300v1.500l-3.700 5h-2.600z" fill="#fff"/><path d="M-5.100 -2.200h2.100v-3.100l3.700 5.200-3.700 5v-3.100h-2.100z" fill="#008000"/><path d="M-5 -4.700h1.300v1.700h-1.300zM-5 3.400h1.300v1.300h-1.300z" fill="#008000"/></g><g transform="translate(479.2 255.4)"><path d="M-0.100 0.800l5.800-5v10z" fill="#fff"/><path d="M0.800 0.800l4.300-4v8z" fill="#daa520"/></g><g transform="translate(477.5 277)"><path d="M-5.500 -6h2.600l3.700 5.300v1.500l-3.700 5h-2.600z" fill="#fff"/><path d="M-5.100 -2.200h2.100v-3.100l3.700 5.200-3.700 5v-3.100h-2.100z" fill="#008000"/><path d="M-5 -4.700h1.300v1.700h-1.300zM-5 3.400h1.300v1.300h-1.300z" fill="#008000"/></g><g transform="translate(477.5 277.6)"><path d="M-0.100 0.800l5.800-5v10z" fill="#fff"/><path d="M0.800 0.800l4.300-4v8z" fill="#daa520"/></g><g transform="translate(488 272.3)"><path d="M-5.500 -6h2.600l3.700 5.300v1.500l-3.700 5h-2.600z" fill="#fff"/><path d="M-5.100 -2.200h2.100v-3.100l3.700 5.200-3.700 5v-3.100h-2.100z" fill="#008000"/><path d="M-5 -4.700h1.300v1.700h-1.300zM-5 3.400h1.300v1.300h-1.300z" fill="#008000"/></g><g transform="translate(488 272.9)"><path d="M-0.100 0.800l5.800-5v10z" fill="#fff"/><path d="M0.800 0.800l4.300-4v8z" fill="#daa520"/></g><g transform="translate(486.8 285.1)"><path d="M-5.500 -6h2.600l3.700 5.300v1.500l-3.700 5h-2.600z" fill="#fff"/><path d="M-5.100 -2.200h2.100v-3.100l3.700 5.200-3.700 5v-3.100h-2.100z" fill="#008000"/><path d="M-5 -4.700h1.300v1.700h-1.300zM-5 3.400h1.300v1.300h-1.300z" fill="#008000"/></g><g transform="translate(486.8 285.7)"><path d="M-0.100 0.800l5.800-5v10z" fill="#fff"/><path d="M0.800 0.800l4.300-4v8z" fill="#daa520"/></g><g transform="translate(504 280.7)"><path d="M-5.500 -6h2.600l3.700 5.300v1.500l-3.700 5h-2.600z" fill="#fff"/><path d="M-5.100 -2.200h2.100v-3.100l3.700 5.200-3.700 5v-3.100h-2.100z" fill="#008000"/><path d="M-5 -4.700h1.300v1.700h-1.300zM-5 3.400h1.300v1.300h-1.300z" fill="#008000"/></g><g transform="translate(504 281.3)"><path d="M-0.100 0.800l5.800-5v10z" fill="#fff"/><path d="M0.800 0.800l4.300-4v8z" fill="#daa520"/></g><g transform="translate(519.4 273.5)"><path d="M-5.500 -6h2.600l3.700 5.300v1.500l-3.700 5h-2.600z" fill="#fff"/><path d="M-5.100 -2.200h2.100v-3.100l3.700 5.200-3.700 5v-3.100h-2.100z" fill="#008000"/><path d="M-5 -4.700h1.300v1.700h-1.300zM-5 3.400h1.300v1.300h-1.300z" fill="#008000"/></g><g transform="translate(519.4 274.1)"><path d="M-0.100 0.800l5.800-5v10z" fill="#fff"/><path d="M0.800 0.800l4.300-4v8z" fill="#daa520"/></g><g transform="translate(552 260.2)"><path d="M-5.500 -6h2.600l3.700 5.300v1.500l-3.700 5h-2.600z" fill="#fff"/><path d="M-5.100 -2.200h2.100v-3.100l3.700 5.200-3.700 5v-3.100h-2.100z" fill="#008000"/><path d="M-5 -4.700h1.300v1.700h-1.300zM-5 3.400h1.300v1.300h-1.300z" fill="#008000"/></g><g transform="translate(552 260.8)"><path d="M-0.100 0.800l5.800-5v10z" fill="#fff"/><path d="M0.800 0.800l4.300-4v8z" fill="#daa520"/></g><g transform="translate(552 290)"><path d="M-5.500 -6h2.600l3.700 5.300v1.500l-3.700 5h-2.600z" fill="#fff"/><path d="M-5.100 -2.200h2.100v-3.100l3.700 5.200-3.700 5v-3.100h-2.100z" fill="#008000"/><path d="M-5 -4.700h1.300v1.700h-1.300zM-5 3.400h1.300v1.300h-1.300z" fill="#008000"/></g><g transform="translate(552 290.6)"><path d="M-0.100 0.800l5.800-5v10z" fill="#fff"/><path d="M0.800 0.800l4.300-4v8z" fill="#daa520"/></g><g transform="translate(479 300.3)"><path d="M-5.500 -6h2.600l3.700 5.300v1.500l-3.700 5h-2.600z" fill="#fff"/><path d="M-5.100 -2.200h2.100v-3.100l3.700 5.200-3.700 5v-3.100h-2.100z" fill="#008000"/><path d="M-5 -4.700h1.300v1.700h-1.300zM-5 3.400h1.300v1.300h-1.300z" fill="#008000"/></g><g transform="translate(479 300.9)"><path d="M-0.100 0.800l5.800-5v10z" fill="#fff"/><path d="M0.800 0.800l4.300-4v8z" fill="#daa520"/></g><g transform="translate(503.7 303.7)"><path d="M-5.500 -6h2.600l3.700 5.300v1.500l-3.700 5h-2.600z" fill="#fff"/><path d="M-5.100 -2.200h2.100v-3.100l3.700 5.200-3.700 5v-3.100h-2.100z" fill="#008000"/><path d="M-5 -4.700h1.300v1.700h-1.300zM-5 3.400h1.300v1.300h-1.300z" fill="#008000"/></g><g transform="translate(503.7 304.3)"><path d="M-0.100 0.800l5.800-5v10z" fill="#fff"/><path d="M0.800 0.800l4.300-4v8z" fill="#daa520"/></g><g transform="translate(536 300.2)"><path d="M-5.500 -6h2.600l3.700 5.300v1.500l-3.700 5h-2.600z" fill="#fff"/><path d="M-5.100 -2.200h2.100v-3.100l3.700 5.200-3.700 5v-3.100h-2.100z" fill="#008000"/><path d="M-5 -4.700h1.300v1.700h-1.300zM-5 3.400h1.300v1.300h-1.300z" fill="#008000"/></g><g transform="translate(536 300.8)"><path d="M-0.100 0.800l5.800-5v10z" fill="#fff"/><path d="M0.800 0.800l4.300-4v8z" fill="#daa520"/></g><g transform="translate(541.6 298)"><path d="M-5.500 -6h2.600l3.700 5.300v1.500l-3.700 5h-2.600z" fill="#fff"/><path d="M-5.100 -2.200h2.100v-3.100l3.700 5.200-3.700 5v-3.100h-2.100z" fill="#008000"/><path d="M-5 -4.700h1.300v1.700h-1.300zM-5 3.400h1.300v1.300h-1.300z" fill="#008000"/></g><g transform="translate(541.6 298.6)"><path d="M-0.100 0.800l5.800-5v10z" fill="#fff"/><path d="M0.800 0.800l4.300-4v8z" fill="#daa520"/></g><g transform="translate(518.3 306.1)"><path d="M-5.500 -6h2.600l3.700 5.300v1.500l-3.700 5h-2.600z" fill="#fff"/><path d="M-5.100 -2.200h2.100v-3.100l3.700 5.200-3.700 5v-3.100h-2.100z" fill="#008000"/><path d="M-5 -4.700h1.300v1.700h-1.300zM-5 3.400h1.300v1.300h-1.300z" fill="#008000"/></g><g transform="translate(518.3 306.7)"><path d="M-0.100 0.800l5.800-5v10z" fill="#fff"/><path d="M0.800 0.800l4.300-4v8z" fill="#daa520"/></g><g transform="translate(486.4 312.7)"><path d="M-5.500 -6h2.600l3.700 5.300v1.500l-3.700 5h-2.600z" fill="#fff"/><path d="M-5.100 -2.200h2.100v-3.100l3.700 5.200-3.700 5v-3.100h-2.100z" fill="#008000"/><path d="M-5 -4.700h1.300v1.700h-1.300zM-5 3.400h1.300v1.300h-1.300z" fill="#008000"/></g><g transform="translate(486.4 313.3)"><path d="M-0.100 0.800l5.800-5v10z" fill="#fff"/><path d="M0.800 0.800l4.300-4v8z" fill="#daa520"/></g><g transform="translate(519.7 310.2)"><path d="M-5.500 -6h2.600l3.700 5.300v1.500l-3.700 5h-2.600z" fill="#fff"/><path d="M-5.100 -2.200h2.100v-3.100l3.700 5.200-3.700 5v-3.100h-2.100z" fill="#008000"/><path d="M-5 -4.700h1.300v1.700h-1.300zM-5 3.400h1.300v1.300h-1.300z" fill="#008000"/></g><g transform="translate(519.7 310.8)"><path d="M-0.100 0.800l5.800-5v10z" fill="#fff"/><path d="M0.800 0.800l4.300-4v8z" fill="#daa520"/></g><g transform="translate(511 325.5)"><path d="M-5.500 -6h2.600l3.700 5.300v1.500l-3.700 5h-2.600z" fill="#fff"/><path d="M-5.100 -2.200h2.100v-3.100l3.700 5.200-3.700 5v-3.100h-2.100z" fill="#008000"/><path d="M-5 -4.700h1.300v1.700h-1.300zM-5 3.400h1.300v1.300h-1.300z" fill="#008000"/></g><g transform="translate(511 326.1)"><path d="M-0.100 0.800l5.800-5v10z" fill="#fff"/><path d="M0.800 0.800l4.300-4v8z" fill="#daa520"/></g><g transform="translate(543.5 327.2)"><path d="M-5.500 -6h2.600l3.700 5.300v1.500l-3.700 5h-2.600z" fill="#fff"/><path d="M-5.100 -2.200h2.100v-3.100l3.700 5.200-3.700 5v-3.100h-2.100z" fill="#008000"/><path d="M-5 -4.700h1.300v1.700h-1.300zM-5 3.400h1.300v1.300h-1.300z" fill="#008000"/></g><g transform="translate(543.5 327.8)"><path d="M-0.100 0.800l5.800-5v10z" fill="#fff"/><path d="M0.800 0.800l4.300-4v8z" fill="#daa520"/></g><g transform="translate(543.5 341.7)"><path d="M-5.500 -6h2.600l3.700 5.300v1.500l-3.700 5h-2.600z" fill="#fff"/><path d="M-5.100 -2.200h2.100v-3.100l3.700 5.200-3.700 5v-3.100h-2.100z" fill="#008000"/><path d="M-5 -4.700h1.300v1.700h-1.300zM-5 3.400h1.300v1.300h-1.300z" fill="#008000"/></g><g transform="translate(543.5 342.3)"><path d="M-0.100 0.800l5.800-5v10z" fill="#fff"/><path d="M0.800 0.800l4.300-4v8z" fill="#daa520"/></g><g transform="translate(504.3 350.2)"><path d="M-5.500 -6h2.600l3.700 5.300v1.500l-3.700 5h-2.600z" fill="#fff"/><path d="M-5.100 -2.200h2.100v-3.100l3.700 5.200-3.700 5v-3.100h-2.100z" fill="#008000"/><path d="M-5 -4.700h1.300v1.700h-1.300zM-5 3.400h1.300v1.300h-1.300z" fill="#008000"/></g><g transform="translate(504.3 350.8)"><path d="M-0.100 0.800l5.800-5v10z" fill="#fff"/><path d="M0.800 0.800l4.300-4v8z" fill="#daa520"/></g><g transform="translate(511 345.1)"><path d="M-5.500 -6h2.600l3.700 5.300v1.500l-3.700 5h-2.600z" fill="#fff"/><path d="M-5.100 -2.200h2.100v-3.100l3.700 5.200-3.700 5v-3.100h-2.100z" fill="#008000"/><path d="M-5 -4.700h1.300v1.700h-1.300zM-5 3.400h1.300v1.300h-1.300z" fill="#008000"/></g><g transform="translate(511 345.7)"><path d="M-0.100 0.800l5.800-5v10z" fill="#fff"/><path d="M0.800 0.800l4.300-4v8z" fill="#daa520"/></g><g transform="translate(543.5 369.5)"><path d="M-5.500 -6h2.600l3.700 5.300v1.500l-3.700 5h-2.600z" fill="#fff"/><path d="M-5.100 -2.200h2.100v-3.100l3.700 5.200-3.700 5v-3.100h-2.100z" fill="#008000"/><path d="M-5 -4.700h1.300v1.700h-1.300zM-5 3.400h1.300v1.300h-1.300z" fill="#008000"/></g><g transform="translate(543.5 366)"><path d="M-0.100 0.800l5.800-5v10z" fill="#fff"/><path d="M0.800 0.800l4.300-4v8z" fill="#daa520"/></g><g transform="translate(512 391)"><path d="M-5.500 -6h2.600l3.700 5.300v1.500l-3.700 5h-2.600z" fill="#fff"/><path d="M-5.100 -2.200h2.100v-3.100l3.700 5.200-3.700 5v-3.100h-2.100z" fill="#008000"/><path d="M-5 -4.700h1.300v1.700h-1.300zM-5 3.400h1.300v1.300h-1.300z" fill="#008000"/></g><g transform="translate(512.2 385.6)"><path d="M-0.100 0.800l5.800-5v10z" fill="#fff"/><path d="M0.800 0.800l4.300-4v8z" fill="#daa520"/></g><g transform="translate(546 311.7)"><path d="M-5.500 -6h2.600l3.700 5.300v1.500l-3.700 5h-2.600z" fill="#fff"/><path d="M-5.100 -2.200h2.100v-3.100l3.700 5.200-3.700 5v-3.100h-2.100z" fill="#008000"/><path d="M-5 -4.700h1.300v1.700h-1.300zM-5 3.400h1.300v1.300h-1.300z" fill="#008000"/></g><g transform="translate(546 312.3)"><path d="M-0.100 0.800l5.800-5v10z" fill="#fff"/><path d="M0.800 0.800l4.300-4v8z" fill="#daa520"/></g><g transform="translate(599.6 262.3)"><path d="M-5.500 -6h2.600l3.700 5.300v1.500l-3.700 5h-2.600z" fill="#fff"/><path d="M-5.100 -2.200h2.100v-3.100l3.700 5.200-3.700 5v-3.100h-2.100z" fill="#008000"/><path d="M-5 -4.700h1.300v1.700h-1.300zM-5 3.400h1.300v1.300h-1.300z" fill="#008000"/></g><g transform="translate(599.6 262.9)"><path d="M-0.100 0.800l5.800-5v10z" fill="#fff"/><path d="M0.800 0.800l4.300-4v8z" fill="#daa520"/></g><g transform="translate(599.6 289.3)"><path d="M-5.500 -6h2.600l3.700 5.300v1.500l-3.700 5h-2.600z" fill="#fff"/><path d="M-5.100 -2.200h2.100v-3.100l3.700 5.200-3.700 5v-3.100h-2.100z" fill="#008000"/><path d="M-5 -4.700h1.300v1.700h-1.300zM-5 3.400h1.300v1.300h-1.300z" fill="#008000"/></g><g transform="translate(599.6 289.9)"><path d="M-0.100 0.800l5.800-5v10z" fill="#fff"/><path d="M0.800 0.800l4.300-4v8z" fill="#daa520"/></g><g transform="translate(631.8 232.7)"><path d="M-5.500 -6h2.600l3.700 5.300v1.500l-3.700 5h-2.600z" fill="#fff"/><path d="M-5.100 -2.200h2.100v-3.100l3.700 5.200-3.700 5v-3.100h-2.100z" fill="#008000"/><path d="M-5 -4.700h1.300v1.700h-1.300zM-5 3.400h1.300v1.300h-1.300z" fill="#008000"/></g><g transform="translate(631.8 233.3)"><path d="M-0.100 0.800l5.800-5v10z" fill="#fff"/><path d="M0.800 0.800l4.300-4v8z" fill="#daa520"/></g><g transform="translate(680 156.7)"><path d="M-5.500 -6h2.600l3.700 5.300v1.500l-3.700 5h-2.600z" fill="#fff"/><path d="M-5.100 -2.200h2.100v-3.100l3.700 5.200-3.700 5v-3.100h-2.100z" fill="#008000"/><path d="M-5 -4.700h1.300v1.700h-1.300zM-5 3.400h1.300v1.300h-1.300z" fill="#008000"/></g><g transform="translate(680 157.3)"><path d="M-0.100 0.800l5.800-5v10z" fill="#fff"/><path d="M0.800 0.800l4.300-4v8z" fill="#daa520"/></g><g transform="translate(663.7 191.9)"><path d="M-5.500 -6h2.600l3.700 5.300v1.500l-3.700 5h-2.600z" fill="#fff"/><path d="M-5.100 -2.200h2.100v-3.100l3.700 5.200-3.700 5v-3.100h-2.100z" fill="#008000"/><path d="M-5 -4.700h1.300v1.700h-1.300zM-5 3.400h1.300v1.300h-1.300z" fill="#008000"/></g><g transform="translate(663.7 192.5)"><path d="M-0.100 0.800l5.800-5v10z" fill="#fff"/><path d="M0.800 0.800l4.300-4v8z" fill="#daa520"/></g><g transform="translate(703.8 191.9)"><path d="M-5.500 -6h2.600l3.700 5.300v1.500l-3.700 5h-2.600z" fill="#fff"/><path d="M-5.100 -2.200h2.100v-3.100l3.700 5.200-3.700 5v-3.100h-2.100z" fill="#008000"/><path d="M-5 -4.700h1.300v1.700h-1.300zM-5 3.400h1.300v1.300h-1.300z" fill="#008000"/></g><g transform="translate(703.8 192.5)"><path d="M-0.100 0.800l5.800-5v10z" fill="#fff"/><path d="M0.800 0.800l4.300-4v8z" fill="#daa520"/></g><g transform="translate(768 223.2)"><path d="M-5.500 -6h2.600l3.700 5.300v1.500l-3.700 5h-2.600z" fill="#fff"/><path d="M-5.100 -2.200h2.100v-3.100l3.700 5.200-3.700 5v-3.100h-2.100z" fill="#008000"/><path d="M-5 -4.700h1.300v1.700h-1.300zM-5 3.400h1.300v1.300h-1.300z" fill="#008000"/></g><g transform="translate(768 223.8)"><path d="M-0.100 0.800l5.800-5v10z" fill="#fff"/><path d="M0.800 0.800l4.300-4v8z" fill="#daa520"/></g><g transform="translate(831.9 192.2)"><path d="M-5.500 -6h2.600l3.700 5.300v1.500l-3.700 5h-2.600z" fill="#fff"/><path d="M-5.100 -2.200h2.100v-3.100l3.700 5.200-3.700 5v-3.100h-2.100z" fill="#008000"/><path d="M-5 -4.700h1.300v1.700h-1.300zM-5 3.400h1.300v1.300h-1.300z" fill="#008000"/></g><g transform="translate(831.4 199.9)"><path d="M-0.100 0.800l5.800-5v10z" fill="#fff"/><path d="M0.800 0.800l4.300-4v8z" fill="#daa520"/></g><g transform="translate(328.5 150.5)"><path d="M-0.100 0.800l5.800-5v10z" fill="#fff"/><path d="M0.800 0.800l4.300-4v8z" fill="#daa520"/></g><g transform="translate(831.4 193.2)"><path d="M-0.100 0.800l5.800-5v10z" fill="#fff"/><path d="M0.800 0.800l4.300-4v8z" fill="#daa520"/></g><path d="M384.5 180L384.5 250M391.5 195L391.5 262M400.5 238L400.5 262M456.5 170L456.5 209M480.5 252L480.5 302M488.5 273L488.5 314M504.5 282L504.5 350M512.5 326L512.5 389M519.5 274L519.5 311M544.5 299L544.5 369M600.5 263L600.5 290" stroke="#ff0000" stroke-width="1" stroke-dasharray="3 3" fill="none" shape-rendering="crispEdges"/><path d="M384.5 180L384.5 250M391.5 195L391.5 262M400.5 238L400.5 262M456.5 170L456.5 209M480.5 252L480.5 302M488.5 273L488.5 314M504.5 282L504.5 350M512.5 326L512.5 389M519.5 274L519.5 311M544.5 299L544.5 369M600.5 263L600.5 290" stroke="#0000ff" stroke-width="1" stroke-dasharray="3 3" stroke-dashoffset="3" fill="none" shape-rendering="crispEdges"/><path d="M343 114L327 122M343 116L327 130M375 140L382 176M327 112L385 190M327 120L390 193M327 128L392 196M400 214L425 191M432 182L456 209M456 168L464 189M463 191L471 218M472 219L479 250M479 256L511 345M486 286L511 388M552.5 261L552.5 291M551 262L536 300M553 264L599 291M600 262L632 233M632 232L664 192M665 192L680 158M680 157L704 192M769 225L828 199" stroke="#ff0000" stroke-width="1" stroke-dasharray="3 3" fill="none" shape-rendering="crispEdges"/><path d="M345 117L376 138M376 139L384 176M408 211L479 252M401 238L479 256M433 181L457 208M457 168L465 190M464 190L472 218M473 219L480 252M487 274L503 304M506 282L511 326M520 275L543 300M504 305L519 311M511 346L543 367M553 262L546 312M553 262L599 289M633 231L664 190M664 191L680 157M681 157L705 191M664 193L704 193M690 194L768 223M704 193L768 225M768 223L830 194" stroke="#0000ff" stroke-width="1" stroke-dasharray="3 3" fill="none" shape-rendering="crispEdges"/><path d="M328 170L372 190" stroke="#ff0000" stroke-width="2.400" stroke-dasharray="0.5 6.500" stroke-linecap="round" fill="none"/></g><path d="M847 83h11l-5.500 5.500z" fill="#778899"/><path d="M986 106.5h3M986 139.5h3M986 172.5h3M986 205.5h3M986 238.5h3M986 271.5h3M986 304.5h3M986 337.5h3M986 370.5h3M986 403.5h3M328.5 407v3M392.5 407v3M456.5 407v3M520.5 407v3M584.5 407v3M648.5 407v3M712.5 407v3M776.5 407v3M840.5 407v3" stroke="#fff" fill="none" shape-rendering="crispEdges"/></svg>
<span class="t" style="left:332.00px;top:85.00px;font-family:'Liberation Sans','DejaVu Sans',sans-serif;font-size:10px;color:#fff;transform:scaleX(0.9409);transform-origin:0 0;">SOLANA,H1  160.48 161.34 159.44 159.71</span>
<span class="t" style="left:991.50px;top:101.60px;font-family:'Liberation Sans','DejaVu Sans',sans-serif;font-size:10px;color:#fff;transform:scaleX(0.8989);transform-origin:0 0;">167.70</span>
<span class="t" style="left:991.50px;top:134.60px;font-family:'Liberation Sans','DejaVu Sans',sans-serif;font-size:10px;color:#fff;transform:scaleX(0.8989);transform-origin:0 0;">165.20</span>
<span class="t" style="left:991.50px;top:167.60px;font-family:'Liberation Sans','DejaVu Sans',sans-serif;font-size:10px;color:#fff;transform:scaleX(0.8989);transform-origin:0 0;">162.70</span>
<span class="t" style="left:991.50px;top:200.60px;font-family:'Liberation Sans','DejaVu Sans',sans-serif;font-size:10px;color:#fff;transform:scaleX(0.8989);transform-origin:0 0;">160.20</span>
<span class="t" style="left:991.50px;top:233.60px;font-family:'Liberation Sans','DejaVu Sans',sans-serif;font-size:10px;color:#fff;transform:scaleX(0.8989);transform-origin:0 0;">157.75</span>
<span class="t" style="left:991.50px;top:266.60px;font-family:'Liberation Sans','DejaVu Sans',sans-serif;font-size:10px;color:#fff;transform:scaleX(0.8989);transform-origin:0 0;">155.25</span>
<span class="t" style="left:991.50px;top:299.60px;font-family:'Liberation Sans','DejaVu Sans',sans-serif;font-size:10px;color:#fff;transform:scaleX(0.8989);transform-origin:0 0;">152.75</span>
<span class="t" style="left:991.50px;top:332.60px;font-family:'Liberation Sans','DejaVu Sans',sans-serif;font-size:10px;color:#fff;transform:scaleX(0.8989);transform-origin:0 0;">150.25</span>
<span class="t" style="left:991.50px;top:365.60px;font-family:'Liberation Sans','DejaVu Sans',sans-serif;font-size:10px;color:#fff;transform:scaleX(0.8989);transform-origin:0 0;">147.75</span>
<span class="t" style="left:991.50px;top:398.60px;font-family:'Liberation Sans','DejaVu Sans',sans-serif;font-size:10px;color:#fff;transform:scaleX(0.8989);transform-origin:0 0;">145.30</span>
<div style="left:988px;top:207px;width:34px;height:11px;background:#fff;"></div>
<span class="t" style="left:991.00px;top:207.80px;font-family:'Liberation Sans','DejaVu Sans',sans-serif;font-size:10px;color:#000;transform:scaleX(0.8989);transform-origin:0 0;-webkit-text-stroke:0.15px #000;">159.71</span>
<span class="t" style="left:326.50px;top:410.00px;font-family:'Liberation Sans','DejaVu Sans',sans-serif;font-size:10px;color:#fff;transform:scaleX(0.9578);transform-origin:0 0;">4 Nov 2025</span>
<span class="t" style="left:390.50px;top:410.00px;font-family:'Liberation Sans','DejaVu Sans',sans-serif;font-size:10px;color:#fff;transform:scaleX(0.9641);transform-origin:0 0;">4 Nov 08:00</span>
<span class="t" style="left:454.50px;top:410.00px;font-family:'Liberation Sans','DejaVu Sans',sans-serif;font-size:10px;color:#fff;transform:scaleX(0.9641);transform-origin:0 0;">4 Nov 16:00</span>
<span class="t" style="left:518.50px;top:410.00px;font-family:'Liberation Sans','DejaVu Sans',sans-serif;font-size:10px;color:#fff;transform:scaleX(0.9641);transform-origin:0 0;">5 Nov 00:00</span>
<span class="t" style="left:582.50px;top:410.00px;font-family:'Liberation Sans','DejaVu Sans',sans-serif;font-size:10px;color:#fff;transform:scaleX(0.9641);transform-origin:0 0;">5 Nov 08:00</span>
<span class="t" style="left:646.50px;top:410.00px;font-family:'Liberation Sans','DejaVu Sans',sans-serif;font-size:10px;color:#fff;transform:scaleX(0.9641);transform-origin:0 0;">5 Nov 16:00</span>
<span class="t" style="left:710.50px;top:410.00px;font-family:'Liberation Sans','DejaVu Sans',sans-serif;font-size:10px;color:#fff;transform:scaleX(0.9641);transform-origin:0 0;">6 Nov 00:00</span>
<span class="t" style="left:774.50px;top:410.00px;font-family:'Liberation Sans','DejaVu Sans',sans-serif;font-size:10px;color:#fff;transform:scaleX(0.9641);transform-origin:0 0;">6 Nov 08:00</span>
<span class="t" style="left:838.50px;top:410.00px;font-family:'Liberation Sans','DejaVu Sans',sans-serif;font-size:10px;color:#fff;transform:scaleX(0.9641);transform-origin:0 0;">6 Nov 16:00</span>
<div style="left:325px;top:429px;width:698px;height:19px;background:#f0f0f0;"></div>
<div style="left:325px;top:429px;width:698px;height:1px;background:#000;"></div>
<div class="tab" style="left:605px;top:429px;width:128px;height:18px;border-top:none"></div>
<span class="t" style="left:341.50px;top:432.00px;font-family:'DejaVu Sans Condensed','DejaVu Sans','Liberation Sans',sans-serif;font-size:11.5px;color:#808080;letter-spacing:0.459px;">BITCOIN,H1</span>
<span class="t" style="left:429.50px;top:432.00px;font-family:'DejaVu Sans Condensed','DejaVu Sans','Liberation Sans',sans-serif;font-size:11.5px;color:#808080;letter-spacing:0.488px;">BITCOINC,H1</span>
<span class="t" style="left:524.50px;top:432.00px;font-family:'DejaVu Sans Condensed','DejaVu Sans','Liberation Sans',sans-serif;font-size:11.5px;color:#808080;letter-spacing:0.470px;">UNISWAP,H1</span>
<span class="t" style="left:616.50px;top:432.00px;font-family:'DejaVu Sans Condensed','DejaVu Sans','Liberation Sans',sans-serif;font-size:11.5px;color:#000;letter-spacing:0.189px;">SOLANA,H1 (visual)</span>
<div style="left:417px;top:432px;width:1px;height:14px;background:#555;"></div>
<div style="left:512px;top:432px;width:1px;height:14px;background:#555;"></div>
<svg class="ic" style="left:994px;top:434px" width="26" height="8" viewBox="0 0 26 8"><path d="M4 0v8l-4-4zM20 0v8l4-4z" fill="#a8a8a8"/></svg>
<div style="left:8px;top:449px;width:1015px;height:1px;background:#ffffff;"></div>
<div style="left:8px;top:450px;width:1015px;height:222px;background:#f0f0f0;"></div>
<svg class="ic" style="left:12px;top:455px" width="7" height="6" viewBox="0 0 7 6"><path d="M0.800 0.600l5 4.800M5.800 0.600l-5 4.800" stroke="#000" stroke-width="1.6"/></svg>
<div class="vstrip" style="left:9px;top:467px;width:14px;height:203px"></div>
<div style="left:9px;top:630px;width:14px;height:40px"><span class="vt">Тестер</span></div>
<div style="left:23px;top:453px;width:1000px;height:1px;background:#a0a0a0;"></div>
<div style="left:23px;top:453px;width:1px;height:217px;background:#a0a0a0;"></div>
<div style="left:24px;top:454px;width:999px;height:193px;background:#fff;"></div>
<svg class="ic" style="left:24px;top:454px" width="999" height="193" viewBox="24 454 999 193"><path d="M60.5 459V596 M92.5 459V596 M124.5 459V596 M156.5 459V596 M188.5 459V596 M220.5 459V596 M252.5 459V596 M284.5 459V596 M316.5 459V596 M348.5 459V596 M380.5 459V596 M412.5 459V596 M444.5 459V596 M476.5 459V596 M508.5 459V596 M540.5 459V596 M572.5 459V596 M604.5 459V596 M636.5 459V596 M668.5 459V596 M700.5 459V596 M732.5 459V596 M764.5 459V596 M796.5 459V596 M828.5 459V596 M860.5 459V596 M892.5 459V596 M924.5 459V596 M956.5 459V596" stroke="#c8c8c8" stroke-width="1" stroke-dasharray="3 3" stroke-dashoffset="0" fill="none"/><path d="M29 467.5H979 M29 499.5H979 M29 531.5H979 M29 563.5H979" stroke="#c8c8c8" stroke-width="1" stroke-dasharray="3 3" fill="none"/><polyline points="191,552 192.5,550.5 194.5,551.5 196,550 198,552 200,551.5 202,551 204,553" fill="none" stroke="#00aa00" stroke-width="1.600" shape-rendering="crispEdges"/><polyline points="122,574 124,572.5 125.5,573 127,571" fill="none" stroke="#00aa00" stroke-width="1.600" shape-rendering="crispEdges"/><polyline points="427,521 428.5,521 430,519.5 432,517" fill="none" stroke="#00aa00" stroke-width="1.600" shape-rendering="crispEdges"/><polyline points="460,521 461.5,520.5 463,520 464.5,521 466,521.5 467.5,521 469,520.5 471,516" fill="none" stroke="#00aa00" stroke-width="1.600" shape-rendering="crispEdges"/><polyline points="721,498 722.5,496 724,496 725.5,497 727,498 729,497.5 731,497 733,498 735,499 736.5,498 738,497.5 740,498 742,501 744,502.5 746,502 748,503 750,503.5 752,503.5 754,501.5 756,503 758,502.5 760,504.5 762,504.5 764,504 766,506 767.5,506.5 769.5,507 771,507.5 772.5,508 774.5,509 776,509.5 778,510 780,510.5 782,509.5 784,508.5 785.5,507 787,505 788.5,501.5 790,498" fill="none" stroke="#00aa00" stroke-width="1.600" shape-rendering="crispEdges"/><polyline points="658,499 660,499 662,499.5 664,499 666,500.5 668,499 670,499 671.5,500 673,500.5 675,500 677,499 679,498 681,499.5 683,497" fill="none" stroke="#00aa00" stroke-width="1.600" shape-rendering="crispEdges"/><polyline points="937,476 938.5,475 940,474.5 941.5,476.5 943,476.5 944.5,477.5 946.5,477 948,477" fill="none" stroke="#00aa00" stroke-width="1.600" shape-rendering="crispEdges"/><polyline points="959,480 960.5,480 962,478 964,475.5 966,474" fill="none" stroke="#00aa00" stroke-width="1.600" shape-rendering="crispEdges"/><polyline points="840,493 841.5,492 843,491.5 844.5,491 846,492.5" fill="none" stroke="#00aa00" stroke-width="1.600" shape-rendering="crispEdges"/><polyline points="29,589.5 31,589.5 33,589 35,589 37.5,589.5 40,590 42.5,589.5 45,588 47.5,588 50,589 52.5,589 55,590 58,588 60,586.5 62,586.5 64,586 66,585.5 68,585.5 70,586 72,586 74,586.5 76,587 78,587 80,586.5 82,585 84,584 86,582.5 88,581 90,580.5 92,580.5 94,579.5 96,578.5 98,578 100,578 102,578 104,578.5 107,577 109,575.5 111,575 113,574 115,573 117.5,573 120,573.5 123,573.5 126.5,570 128.5,570 131,570 133,569.5 135,569 137,567 140,565 142,564.5 144,564 146,562.5 148,563 150,563 152.5,563.5 155,564 157.5,563 160,562.5 162,561 164,560.5 166,560 168,559.5 170,559.5 172,558.5 174.5,558 177,557.5 179.5,556 182,555 184.5,555 187,553.5 189,553 191,552 193,552 195,551 197,552 199,552.5 201,553 203,553 205.5,554 208,554 210.5,554 213,554 215,554.5 217,555 220.5,556 222.5,550 226,548 228,547 230,546.5 232.5,546 235,545.5 237.5,545 240,545 242,545 244,545 246,545.5 248,546 250,546.5 253,548 256,549.5 258,546 260,545.5 262,545 264,544.5 266,544 268,542.5 270,542 273,541 275.5,540 278,540 280.5,540 283,539 285.5,538.5 288,537 290.5,536 293,535.5 295.5,535 298,534 300.5,533 303,533 305,533.5 307,532.5 309,532.5 311,532 313,532 315,532 317,532.5 319,533 321,532.5 323,532.5 325,532.5 327,533.5 329,533.5 331,534.5 333,534.5 335,535 337,535 339,535.5 341,536 342,531 345,531 347.5,530 350,529.5 352.5,528 355,528 357.5,527.5 360,527 362.5,525.5 365,525 367,524 369,524 371,524 373,523.5 375,523.5 377,523.5 379,524.5 381,524.5 383,525 385,526 387,526.5 389,527 391,523 394,521.5 396,520.5 398,519.5 400,519 402,518 404,517 406,516.5 408,516 410,516 412,516.5 414.5,517 417,518 419.5,519.5 422,520 424,521.5 426,522 428,522.5 431,522 432,517 434,517 436,516.5 438.5,516 441,517 443,517.5 445,518 447.5,519.5 450,520 452.5,521 455,521.5 457.5,522 460,522 463,523 466,522 468,524 470,525 472,515 474,515 476,514 478.5,514 481,513.5 483.5,513 486,513 488.5,513 491,512.5 494,513.5 497,515 500,516 501,511 503.5,510 506,510.5 508,511 510,510 512,510 514,509.5 516,510 518,509.5 520,509 522,508.5 524,508.5 526.5,508 528.5,508.5 531,507.5 533,508 535,508 538,506.5 540.5,506 542.5,506 545,505.5 547.5,506.5 550,506.5 552,507 554,508 556,507.5 558,508 561,506 563,505 565,505 567,505.5 569,506 571,506.5 573,507 575,506 578,504.5 580,505.5 582,505.5 584,506 586,506.5 589,506 591,505 593,503.5 595.5,503 598,503 600.5,503 603,502.5 605,503 608,499.5 610.5,499 613,499 615.5,499 618,498.5 620,499 622,499 624,500 626,500.5 629,501 632,499 634,498.5 636,498 638,498.5 640,497 642,497.5 644,497 646,497 648,497 650,497 652,498 654,498.5 656,499 658,499.5 660,500 662,501 664,501 666,501.5 668,502 670,502 672.5,503 675,502.5 677.5,502 680,503 682,503.5 684,497 686,496 688,496 690,496 692,496 694,495.5 696,495 698,495 700,494.5 702.5,495.5 705,495.5 707.5,496 710,497 712,497 714,497.5 716,498 718.5,498.5 720.5,499 723,499 725.5,500 728,500.5 730.5,501 733,501 735.5,501.5 738,503 740,503 742,504.5 744.5,505 747,506 749.5,506.5 752,507 754.5,507 757,507.5 759.5,508 762,509 764,509.5 766,510 768,510 770,511 772.5,512 775,513 777.5,514 780,514.5 782,516 784,516 787,517 789,516 790,510 791,493.5 793.5,493.5 796,493.5 798,493 800,493 802.5,493.5 805,493 807.5,493 810,492.5 812.5,493 814.5,492 817,492 819,492.5 821,492 823,491.5 825.5,491 827.5,491.5 830,491 832,491.5 834,492 836,493 838,493.5 840,493 842,494 845,493.5 848,489.5 851,489 853,490 855,490 857,491 859,491.5 861.5,492 864,492 866,491.5 868,493 870,492.5 873,494 876,496 877,488 879,481.5 881,480 883,479 885,478.5 887,478 889.5,478 892,477.5 894,476.5 896,476.5 898,477 900,477.5 902.5,476 905,476 907,475.5 909,474.5 911,474.5 913,473.5 915,474 917,473.5 919.5,474 922,473 924.5,472.5 927,473 929.5,473.5 932,475 934.5,476 937,476.5 939.5,476 942,476 944.5,476.5 947,477 949.5,477.5 952,478 954,479 956,479.5 958.5,479.5 961,480.5 963,481 965,480 966,475 968,473 970,472 972,472.5 975,473.5 978,474.5" fill="none" stroke="#0000a8" stroke-width="2.600" stroke-linejoin="round" shape-rendering="crispEdges"/><rect x="28.500" y="458.500" width="951" height="138" fill="none" stroke="#000"/><rect x="28.500" y="598.500" width="951" height="32" fill="none" stroke="#000"/><rect x="29" y="616" width="950" height="14" fill="#00aa00"/><path d="M33.5 612v4M35.5 612v4M38.5 612v4M41.5 612v4M44.5 612v4M46.5 612v4M49.5 612v4M53.5 612v4M57.5 612v4M61 602h3v14h-3zM65 602h1v14h-1zM67 602h1v14h-1zM69 602h1v14h-1zM72 602h1v14h-1zM74 602h2v14h-2zM78 602h1v14h-1zM80 602h1v14h-1zM84 602h1v14h-1zM87 602h1v14h-1zM89 602h1v14h-1zM91 602h1v14h-1zM93 602h2v14h-2zM96 602h1v14h-1zM100 602h1v14h-1zM103 602h1v14h-1zM105 602h1v14h-1zM107 602h1v14h-1zM109 602h2v14h-2zM112 602h1v14h-1zM114 602h2v14h-2zM120 602h1v14h-1zM123 602h3v14h-3zM127 602h2v14h-2zM130 602h1v14h-1zM132 602h1v14h-1zM135 602h4v14h-4zM148 602h1v14h-1zM151 602h4v14h-4zM156 602h3v14h-3zM166 602h2v14h-2zM169 602h2v14h-2zM172 602h1v14h-1zM174 602h2v14h-2zM177 602h3v14h-3zM181 602h2v14h-2zM184 602h1v14h-1zM186 602h1v14h-1zM188 602h3v14h-3zM192 602h4v14h-4zM200 602h1v14h-1zM202 602h2v14h-2zM213 602h3v14h-3zM218 602h1v14h-1zM220 602h1v14h-1zM228 602h1v14h-1zM230 602h2v14h-2zM233 602h6v14h-6zM240 602h1v14h-1zM242 602h6v14h-6zM249 602h2v14h-2zM254 602h6v14h-6zM262 602h1v14h-1zM264 602h3v14h-3zM273 602h1v14h-1zM275 602h4v14h-4zM280 602h2v14h-2zM283 602h1v14h-1zM286 602h1v14h-1zM290 602h4v14h-4zM295 602h1v14h-1zM297 602h1v14h-1zM299 602h2v14h-2zM302 602h1v14h-1zM304 602h2v14h-2zM309 602h3v14h-3zM315 602h2v14h-2zM318 602h1v14h-1zM320 602h1v14h-1zM323 602h6v14h-6zM331 602h1v14h-1zM333 602h1v14h-1zM335 602h2v14h-2zM338 602h1v14h-1zM340 602h1v14h-1zM342 602h3v14h-3zM347 602h1v14h-1zM349 602h1v14h-1zM351 602h4v14h-4zM356 602h1v14h-1zM360 602h1v14h-1zM364 602h1v14h-1zM366 602h6v14h-6zM388 602h1v14h-1zM391 602h1v14h-1zM394 602h4v14h-4zM399 602h1v14h-1zM402 602h1v14h-1zM404 602h1v14h-1zM406 602h1v14h-1zM408 602h2v14h-2zM411 602h3v14h-3zM415 602h1v14h-1zM418 602h1v14h-1zM422 602h1v14h-1zM430 602h3v14h-3zM435 602h4v14h-4zM440 602h1v14h-1zM442 602h4v14h-4zM447 602h4v14h-4zM452 602h1v14h-1zM454 602h1v14h-1zM457 602h2v14h-2zM460 602h1v14h-1zM462 602h1v14h-1zM465 602h2v14h-2zM469 602h1v14h-1zM471 602h1v14h-1zM473 602h2v14h-2zM485 602h2v14h-2zM488 602h3v14h-3zM492 602h3v14h-3zM497 602h2v14h-2zM500 602h2v14h-2zM504 602h6v14h-6zM512 602h1v14h-1zM515 602h2v14h-2zM525 602h2v14h-2zM529 602h2v14h-2zM532 602h3v14h-3zM536 602h1v14h-1zM538 602h4v14h-4zM543 602h2v14h-2zM547 602h4v14h-4zM553 602h3v14h-3zM561 602h2v14h-2zM564 602h2v14h-2zM567 602h2v14h-2zM571 602h2v14h-2zM574 602h1v14h-1zM576 602h4v14h-4zM582 602h6v14h-6zM589 602h6v14h-6zM596 602h1v14h-1zM599 602h4v14h-4zM604 602h1v14h-1zM607 602h1v14h-1zM611 602h4v14h-4zM618 602h1v14h-1zM620 602h1v14h-1zM622 602h1v14h-1zM624 602h1v14h-1zM626 602h6v14h-6zM640 602h1v14h-1zM642 602h6v14h-6zM650 602h1v14h-1zM652 602h2v14h-2zM655 602h1v14h-1zM657 602h6v14h-6zM664 602h2v14h-2zM667 602h1v14h-1zM670 602h2v14h-2zM678 602h2v14h-2zM682 602h2v14h-2zM685 602h2v14h-2zM689 602h2v14h-2zM692 602h1v14h-1zM694 602h1v14h-1zM697 602h4v14h-4zM706 602h1v14h-1zM708 602h1v14h-1zM710 602h1v14h-1zM715 602h2v14h-2zM718 602h4v14h-4zM723 602h1v14h-1zM725 602h1v14h-1zM727 602h1v14h-1zM729 602h1v14h-1zM731 602h2v14h-2zM734 602h3v14h-3zM738 602h2v14h-2zM741 602h4v14h-4zM748 602h2v14h-2zM751 602h2v14h-2zM755 602h2v14h-2zM758 602h1v14h-1zM760 602h4v14h-4zM770 602h1v14h-1zM772 602h4v14h-4zM778 602h1v14h-1zM780 602h1v14h-1zM782 602h2v14h-2zM785 602h4v14h-4zM790 602h2v14h-2zM793 602h2v14h-2zM797 602h2v14h-2zM805 602h2v14h-2zM809 602h4v14h-4zM814 602h1v14h-1zM816 602h1v14h-1zM818 602h3v14h-3zM822 602h6v14h-6zM837 602h1v14h-1zM839 602h2v14h-2zM842 602h1v14h-1zM844 602h6v14h-6zM852 602h1v14h-1zM854 602h1v14h-1zM856 602h2v14h-2zM865 602h1v14h-1zM867 602h1v14h-1zM870 602h1v14h-1zM874 602h2v14h-2zM879 602h3v14h-3zM888 602h2v14h-2zM892 602h3v14h-3zM899 602h3v14h-3zM903 602h3v14h-3zM907 602h4v14h-4zM912 602h1v14h-1zM916 602h3v14h-3zM920 602h1v14h-1zM922 602h2v14h-2zM925 602h1v14h-1zM928 602h1v14h-1zM930 602h2v14h-2zM933 602h1v14h-1zM935 602h2v14h-2zM942 602h1v14h-1zM944 602h1v14h-1zM946 602h2v14h-2zM949 602h1v14h-1zM951 602h3v14h-3zM955 602h2v14h-2zM958 602h1v14h-1zM962 602h1v14h-1zM964 602h1v14h-1zM966 602h2v14h-2zM969 602h1v14h-1zM972 602h1v14h-1zM974 602h1v14h-1zM976 602h1v14h-1z" fill="#00aa00" stroke="#00aa00" stroke-width="0" shape-rendering="crispEdges"/><path d="M33.5 612v4 M35.5 612v4 M38.5 612v4 M41.5 612v4 M44.5 612v4 M46.5 612v4 M49.5 612v4 M53.5 612v4 M57.5 612v4" stroke="#00aa00" stroke-width="1" fill="none" shape-rendering="crispEdges"/><path d="M60.5 631v2 M92.5 631v2 M124.5 631v2 M156.5 631v2 M188.5 631v2 M220.5 631v2 M252.5 631v2 M284.5 631v2 M316.5 631v2 M348.5 631v2 M380.5 631v2 M412.5 631v2 M444.5 631v2 M476.5 631v2 M508.5 631v2 M540.5 631v2 M572.5 631v2 M604.5 631v2 M636.5 631v2 M668.5 631v2 M700.5 631v2 M732.5 631v2 M764.5 631v2 M796.5 631v2 M828.5 631v2 M860.5 631v2 M892.5 631v2 M924.5 631v2 M956.5 631v2 M980 467.5h2 M980 499.5h2 M980 531.5h2 M980 563.5h2 M980 596.500h2" stroke="#000" fill="none"/></svg>
<div style="left:30px;top:461px;width:83px;height:12px;background:#fff;"></div>
<div style="left:30px;top:600px;width:31px;height:12px;background:#fff;"></div>
<span class="t" style="left:31.50px;top:462.00px;font-family:'Liberation Sans','DejaVu Sans',sans-serif;font-size:9px;color:#0000c0;letter-spacing:-0.190px;">Баланс</span>
<span class="t" style="left:63.80px;top:462.00px;font-family:'Liberation Sans','DejaVu Sans',sans-serif;font-size:9px;color:#000;">/</span>
<span class="t" style="left:69.80px;top:462.00px;font-family:'Liberation Sans','DejaVu Sans',sans-serif;font-size:9px;color:#00b000;letter-spacing:0.328px;">Средства</span>
<span class="t" style="left:32.00px;top:601.00px;font-family:'Liberation Sans','DejaVu Sans',sans-serif;font-size:9px;color:#000;letter-spacing:0.062px;">Объем</span>
<span class="t" style="left:984.00px;top:463.50px;font-family:'Liberation Sans','DejaVu Sans',sans-serif;font-size:8.8px;color:#000;letter-spacing:0.005px;">8665</span>
<span class="t" style="left:984.00px;top:495.50px;font-family:'Liberation Sans','DejaVu Sans',sans-serif;font-size:8.8px;color:#000;letter-spacing:0.005px;">6644</span>
<span class="t" style="left:984.00px;top:527.50px;font-family:'Liberation Sans','DejaVu Sans',sans-serif;font-size:8.8px;color:#000;letter-spacing:0.005px;">4623</span>
<span class="t" style="left:984.00px;top:559.50px;font-family:'Liberation Sans','DejaVu Sans',sans-serif;font-size:8.8px;color:#000;letter-spacing:0.005px;">2601</span>
<span class="t" style="left:984.00px;top:591.50px;font-family:'Liberation Sans','DejaVu Sans',sans-serif;font-size:8.8px;color:#000;letter-spacing:0.004px;">580</span>
<span class="t" style="left:29.30px;top:632.50px;font-family:'Liberation Sans','DejaVu Sans',sans-serif;font-size:8.8px;color:#000;">0</span>
<span class="t" style="left:45.02px;top:632.50px;font-family:'Liberation Sans','DejaVu Sans',sans-serif;font-size:8.8px;color:#000;letter-spacing:0.050px;">305</span>
<span class="t" style="left:77.02px;top:632.50px;font-family:'Liberation Sans','DejaVu Sans',sans-serif;font-size:8.8px;color:#000;letter-spacing:0.050px;">576</span>
<span class="t" style="left:109.02px;top:632.50px;font-family:'Liberation Sans','DejaVu Sans',sans-serif;font-size:8.8px;color:#000;letter-spacing:0.050px;">846</span>
<span class="t" style="left:137.38px;top:632.50px;font-family:'Liberation Sans','DejaVu Sans',sans-serif;font-size:8.8px;color:#000;letter-spacing:0.050px;">1117</span>
<span class="t" style="left:168.07px;top:632.50px;font-family:'Liberation Sans','DejaVu Sans',sans-serif;font-size:8.8px;color:#000;letter-spacing:0.050px;">1388</span>
<span class="t" style="left:200.07px;top:632.50px;font-family:'Liberation Sans','DejaVu Sans',sans-serif;font-size:8.8px;color:#000;letter-spacing:0.050px;">1659</span>
<span class="t" style="left:232.07px;top:632.50px;font-family:'Liberation Sans','DejaVu Sans',sans-serif;font-size:8.8px;color:#000;letter-spacing:0.050px;">1930</span>
<span class="t" style="left:264.07px;top:632.50px;font-family:'Liberation Sans','DejaVu Sans',sans-serif;font-size:8.8px;color:#000;letter-spacing:0.050px;">2201</span>
<span class="t" style="left:296.07px;top:632.50px;font-family:'Liberation Sans','DejaVu Sans',sans-serif;font-size:8.8px;color:#000;letter-spacing:0.050px;">2471</span>
<span class="t" style="left:328.07px;top:632.50px;font-family:'Liberation Sans','DejaVu Sans',sans-serif;font-size:8.8px;color:#000;letter-spacing:0.050px;">2742</span>
<span class="t" style="left:360.07px;top:632.50px;font-family:'Liberation Sans','DejaVu Sans',sans-serif;font-size:8.8px;color:#000;letter-spacing:0.050px;">3013</span>
<span class="t" style="left:392.07px;top:632.50px;font-family:'Liberation Sans','DejaVu Sans',sans-serif;font-size:8.8px;color:#000;letter-spacing:0.050px;">3284</span>
<span class="t" style="left:424.07px;top:632.50px;font-family:'Liberation Sans','DejaVu Sans',sans-serif;font-size:8.8px;color:#000;letter-spacing:0.050px;">3555</span>
<span class="t" style="left:456.07px;top:632.50px;font-family:'Liberation Sans','DejaVu Sans',sans-serif;font-size:8.8px;color:#000;letter-spacing:0.050px;">3826</span>
<span class="t" style="left:488.07px;top:632.50px;font-family:'Liberation Sans','DejaVu Sans',sans-serif;font-size:8.8px;color:#000;letter-spacing:0.050px;">4096</span>
<span class="t" style="left:520.07px;top:632.50px;font-family:'Liberation Sans','DejaVu Sans',sans-serif;font-size:8.8px;color:#000;letter-spacing:0.050px;">4367</span>
<span class="t" style="left:552.07px;top:632.50px;font-family:'Liberation Sans','DejaVu Sans',sans-serif;font-size:8.8px;color:#000;letter-spacing:0.050px;">4638</span>
<span class="t" style="left:584.07px;top:632.50px;font-family:'Liberation Sans','DejaVu Sans',sans-serif;font-size:8.8px;color:#000;letter-spacing:0.050px;">4909</span>
<span class="t" style="left:616.07px;top:632.50px;font-family:'Liberation Sans','DejaVu Sans',sans-serif;font-size:8.8px;color:#000;letter-spacing:0.050px;">5180</span>
<span class="t" style="left:648.07px;top:632.50px;font-family:'Liberation Sans','DejaVu Sans',sans-serif;font-size:8.8px;color:#000;letter-spacing:0.050px;">5451</span>
<span class="t" style="left:680.07px;top:632.50px;font-family:'Liberation Sans','DejaVu Sans',sans-serif;font-size:8.8px;color:#000;letter-spacing:0.050px;">5721</span>
<span class="t" style="left:712.07px;top:632.50px;font-family:'Liberation Sans','DejaVu Sans',sans-serif;font-size:8.8px;color:#000;letter-spacing:0.050px;">5992</span>
<span class="t" style="left:744.07px;top:632.50px;font-family:'Liberation Sans','DejaVu Sans',sans-serif;font-size:8.8px;color:#000;letter-spacing:0.050px;">6263</span>
<span class="t" style="left:776.07px;top:632.50px;font-family:'Liberation Sans','DejaVu Sans',sans-serif;font-size:8.8px;color:#000;letter-spacing:0.050px;">6534</span>
<span class="t" style="left:808.07px;top:632.50px;font-family:'Liberation Sans','DejaVu Sans',sans-serif;font-size:8.8px;color:#000;letter-spacing:0.050px;">6805</span>
<span class="t" style="left:840.07px;top:632.50px;font-family:'Liberation Sans','DejaVu Sans',sans-serif;font-size:8.8px;color:#000;letter-spacing:0.050px;">7076</span>
<span class="t" style="left:872.07px;top:632.50px;font-family:'Liberation Sans','DejaVu Sans',sans-serif;font-size:8.8px;color:#000;letter-spacing:0.050px;">7347</span>
<span class="t" style="left:904.07px;top:632.50px;font-family:'Liberation Sans','DejaVu Sans',sans-serif;font-size:8.8px;color:#000;letter-spacing:0.050px;">7617</span>
<span class="t" style="left:936.07px;top:632.50px;font-family:'Liberation Sans','DejaVu Sans',sans-serif;font-size:8.8px;color:#000;letter-spacing:0.050px;">7888</span>
<div style="left:24px;top:647px;width:999px;height:1px;background:#000;"></div>
<div class="tab" style="left:188px;top:647px;width:61px;height:20px"></div>
<span class="t" style="left:36.50px;top:650.00px;font-family:'DejaVu Sans Condensed','DejaVu Sans','Liberation Sans',sans-serif;font-size:11.5px;color:#808080;letter-spacing:0.196px;">Настройки</span>
<span class="t" style="left:116.50px;top:650.00px;font-family:'DejaVu Sans Condensed','DejaVu Sans','Liberation Sans',sans-serif;font-size:11.5px;color:#808080;letter-spacing:-0.132px;">Результаты</span>
<span class="t" style="left:198.80px;top:650.00px;font-family:'DejaVu Sans Condensed','DejaVu Sans','Liberation Sans',sans-serif;font-size:11.5px;color:#000;letter-spacing:0.059px;">График</span>
<span class="t" style="left:260.00px;top:650.00px;font-family:'DejaVu Sans Condensed','DejaVu Sans','Liberation Sans',sans-serif;font-size:11.5px;color:#808080;letter-spacing:-0.298px;">Отчет</span>
<span class="t" style="left:311.50px;top:650.00px;font-family:'DejaVu Sans Condensed','DejaVu Sans','Liberation Sans',sans-serif;font-size:11.5px;color:#808080;letter-spacing:0.023px;">Журнал</span>
<div style="left:106px;top:651px;width:1px;height:14px;background:#555;"></div>
<div style="left:301px;top:651px;width:1px;height:14px;background:#555;"></div>
<div style="left:366px;top:651px;width:1px;height:14px;background:#555;"></div>
<div style="left:8px;top:670px;width:1015px;height:2px;background:#f0f0f0;"></div>
<div style="left:8px;top:672px;width:1015px;height:1px;background:#ffffff;"></div>
<div style="left:8px;top:673px;width:1015px;height:1px;background:#a0a0a0;"></div>
<div style="left:8px;top:674px;width:1015px;height:22px;background:#f0f0f0;"></div>
<div style="left:315px;top:677px;width:1px;height:18px;background:#a0a0a0;"></div>
<div style="left:432px;top:677px;width:1px;height:18px;background:#a0a0a0;"></div>
<div style="left:533px;top:677px;width:1px;height:18px;background:#a0a0a0;"></div>
<div style="left:604px;top:677px;width:1px;height:18px;background:#a0a0a0;"></div>
<div style="left:675px;top:677px;width:1px;height:18px;background:#a0a0a0;"></div>
<div style="left:743px;top:677px;width:1px;height:18px;background:#a0a0a0;"></div>
<div style="left:813px;top:677px;width:1px;height:18px;background:#a0a0a0;"></div>
<div style="left:879px;top:677px;width:1px;height:18px;background:#a0a0a0;"></div>
<span class="t" style="left:10.50px;top:678.50px;font-family:'DejaVu Sans Condensed','DejaVu Sans','Liberation Sans',sans-serif;font-size:11.5px;color:#000;letter-spacing:-0.015px;-webkit-text-stroke:0.12px #000;">Для вызова справки нажмите F1</span>
<span class="t" style="left:437.80px;top:679.00px;font-family:'DejaVu Sans Condensed','DejaVu Sans','Liberation Sans',sans-serif;font-size:12px;color:#000;transform:scaleX(0.8699);transform-origin:0 0;-webkit-text-stroke:0.2px #000;">2025.11.06 02:00</span>
<span class="t" style="left:540.00px;top:679.00px;font-family:'DejaVu Sans Condensed','DejaVu Sans','Liberation Sans',sans-serif;font-size:12px;color:#000;transform:scaleX(0.9016);transform-origin:0 0;-webkit-text-stroke:0.2px #000;">O: 162.24</span>
<span class="t" style="left:610.50px;top:679.00px;font-family:'DejaVu Sans Condensed','DejaVu Sans','Liberation Sans',sans-serif;font-size:12px;color:#000;transform:scaleX(0.9140);transform-origin:0 0;-webkit-text-stroke:0.2px #000;">H: 162.24</span>
<span class="t" style="left:682.00px;top:679.00px;font-family:'DejaVu Sans Condensed','DejaVu Sans','Liberation Sans',sans-serif;font-size:12px;color:#000;transform:scaleX(0.8831);transform-origin:0 0;-webkit-text-stroke:0.2px #000;">L: 160.31</span>
<span class="t" style="left:749.50px;top:679.00px;font-family:'DejaVu Sans Condensed','DejaVu Sans','Liberation Sans',sans-serif;font-size:12px;color:#000;transform:scaleX(0.8955);transform-origin:0 0;-webkit-text-stroke:0.2px #000;">C: 161.26</span>
<span class="t" style="left:819.50px;top:679.00px;font-family:'DejaVu Sans Condensed','DejaVu Sans','Liberation Sans',sans-serif;font-size:12px;color:#000;transform:scaleX(0.8961);transform-origin:0 0;-webkit-text-stroke:0.2px #000;">V: 3787</span>
<span class="t" style="left:913.50px;top:679.00px;font-family:'DejaVu Sans Condensed','DejaVu Sans','Liberation Sans',sans-serif;font-size:12px;color:#000;transform:scaleX(0.9040);transform-origin:0 0;-webkit-text-stroke:0.2px #000;">15221/10 kb</span>
<svg class="ic" style="left:885px;top:679px" width="24" height="12" viewBox="0 0 24 12"><rect x="0.0" y="0" width="1.7" height="9.0" fill="#6b8e23"/><rect x="0.0" y="9.0" width="1.7" height="3.0" fill="#1c4a78"/><rect x="2.6" y="0" width="1.7" height="8.1" fill="#6b8e23"/><rect x="2.6" y="8.1" width="1.7" height="3.9" fill="#1c4a78"/><rect x="5.2" y="0" width="1.7" height="7.2" fill="#6b8e23"/><rect x="5.2" y="7.2" width="1.7" height="4.8" fill="#1c4a78"/><rect x="7.8" y="0" width="1.7" height="6.3" fill="#6b8e23"/><rect x="7.8" y="6.3" width="1.7" height="5.7" fill="#1c4a78"/><rect x="10.4" y="0" width="1.7" height="5.4" fill="#6b8e23"/><rect x="10.4" y="5.4" width="1.7" height="6.6" fill="#1c4a78"/><rect x="13.0" y="0" width="1.7" height="4.5" fill="#6b8e23"/><rect x="13.0" y="4.5" width="1.7" height="7.5" fill="#1c4a78"/><rect x="15.6" y="0" width="1.7" height="3.6" fill="#6b8e23"/><rect x="15.6" y="3.6" width="1.7" height="8.4" fill="#1c4a78"/><rect x="18.2" y="0" width="1.7" height="2.7" fill="#6b8e23"/><rect x="18.2" y="2.7" width="1.7" height="9.3" fill="#1c4a78"/><rect x="20.8" y="0" width="1.7" height="1.8" fill="#6b8e23"/><rect x="20.8" y="1.8" width="1.7" height="10.2" fill="#1c4a78"/></svg>
<svg class="ic" style="left:1011px;top:684px" width="12" height="12" viewBox="0 0 12 12"><path d="M1 12L12 1M5 12l7-7M9 12l3-3" stroke="#a0a0a0" stroke-width="1"/><path d="M2 12L12 2M6 12l6-6M10 12l2-2" stroke="#fff" stroke-width="1"/></svg>
<div style="left:0px;top:702px;width:1023px;height:1px;background:#4a5360;"></div>
<div style="left:0px;top:703px;width:1023px;height:1px;background:#dfe4ea;"></div>
<div style="left:248px;top:702px;width:58px;height:1px;background:#22262c;"></div>
<div style="left:249px;top:703px;width:56px;height:1px;background:#ffffff;"></div>
<div style="left:310px;top:702px;width:58px;height:1px;background:#22262c;"></div>
<div style="left:311px;top:703px;width:56px;height:1px;background:#ffffff;"></div>
<div style="left:372px;top:702px;width:59px;height:1px;background:#22262c;"></div>
<div style="left:373px;top:703px;width:57px;height:1px;background:#ffffff;"></div>
</div>
</body></html>
